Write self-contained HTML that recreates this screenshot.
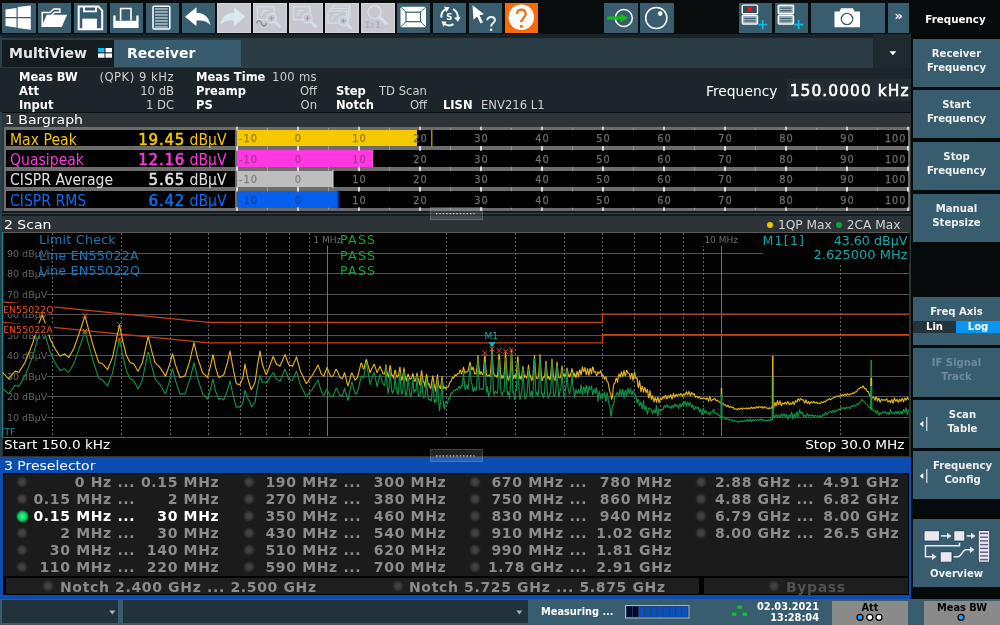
<!DOCTYPE html>
<html><head><meta charset="utf-8"><title>Receiver</title><style>
html,body{margin:0;padding:0;background:#080c0c;}
body{width:1000px;height:625px;position:relative;overflow:hidden;font-family:"DejaVu Sans","Liberation Sans",sans-serif;color:#fff;font-size:11px;}
div,span{position:absolute;box-sizing:border-box;white-space:nowrap;}
svg{position:absolute;overflow:visible;}
.tb{top:2.5px;width:33.5px;height:30px;background:#385d6f;}
.tb.dis{background:#c8c6ce;box-shadow:inset 0 0 0 1px #d4d3da;}
.tb svg{left:0;top:0;}
.sk{left:913px;width:87px;height:48px;background:#385d6f;color:#f0f0f0;font-weight:bold;font-size:10.1px;line-height:14px;text-align:center;}
.sk span{position:static;display:block;}
.b{font-weight:bold;}
.info{font-size:11.5px;line-height:14px;color:#fff;}
.info.v{color:#d0d0d0;font-size:11.6px;}
.ttl{font-size:12px;line-height:15px;color:#fff;left:5px;transform:scaleX(1.165);transform-origin:0 0;}
.bg-lab{font-size:15px;line-height:17.46px;left:10px;transform:scaleX(0.935);transform-origin:0 0;}
.bg-val{font-size:15px;line-height:17.46px;right:773px;transform:scaleX(0.935);transform-origin:100% 0;}
.ps{font-size:14px;font-weight:bold;color:#8c8c8c;line-height:17px;letter-spacing:0.65px;}
.ps.on{color:#fff;}
.led{width:12px;height:12px;border-radius:50%;background:radial-gradient(circle,#484848 0%,#3c3c3c 35%,rgba(44,44,44,0) 72%);}
.led.on{width:13px;height:13px;margin:-0.5px 0 0 -0.5px;background:radial-gradient(circle,#30ff94 0%,#12ea76 28%,#0cb458 50%,rgba(8,100,48,0.75) 66%,rgba(8,60,30,0) 80%);}
</style></head><body><div id="root" style="left:0;top:0;width:1000px;height:625px;will-change:transform">
<div style="left:0;top:0;width:1000px;height:36px;background:#080c0c"></div>
<div class="tb" style="left:2.0px;"><svg width="33.5" height="30" viewBox="0 0 33.5 30"><g transform="translate(0.0,0.0)"><path d="M3.5 6.4 L14.5 5.0 V14.0 H3.5 Z M15.7 4.0 L28.8 2.5 V14.0 H15.7 Z M3.5 15.2 H14.5 V24.5 L3.5 23.1 Z M15.7 15.2 H28.8 V26.7 L15.7 25.1 Z" fill="#fff"/></g></svg></div>
<div class="tb" style="left:37.9px;"><svg width="33.5" height="30" viewBox="0 0 33.5 30"><g transform="translate(0.0,0.0)"><path d="M4.2 23.5 V9.6 H12 L15.8 5.9 H21.8 V9.3 H16.6 L13.6 12.2" fill="none" stroke="#fff" stroke-width="1.5" stroke-linejoin="miter"/><path d="M3.3 24 L8.7 11.8 H29.2 L23.7 24 Z" fill="#fff"/></g></svg></div>
<div class="tb" style="left:73.8px;"><svg width="33.5" height="30" viewBox="0 0 33.5 30"><g transform="translate(0.0,0.0)"><path d="M4.7 3.4 H24.3 L28.2 7.6 V26.3 H4.7 Z" fill="none" stroke="#fff" stroke-width="2"/><path d="M10 3.4 V8.3 H22 V3.4" fill="none" stroke="#fff" stroke-width="1.8"/><rect x="8.3" y="15.7" width="14.6" height="10.6" fill="#fff"/></g></svg></div>
<div class="tb" style="left:109.7px;"><svg width="33.5" height="30" viewBox="0 0 33.5 30"><g transform="translate(0.0,0.0)"><path d="M10.6 17.5 V5.5 H21 V17.5" fill="none" stroke="#fff" stroke-width="1.6"/><path d="M3.3 12.4 H5.6 V17.7 H26.3 V12.4 H28.6 V25.1 H3.3 Z" fill="#fff"/></g></svg></div>
<div class="tb" style="left:145.6px;"><svg width="33.5" height="30" viewBox="0 0 33.5 30"><g transform="translate(0.0,0.0)"><rect x="7" y="3.2" width="16.8" height="22.8" rx="1" fill="none" stroke="#fff" stroke-width="1.5"/><rect x="9" y="5.3" width="12.8" height="1.3" fill="#c4d2d8"/><rect x="9" y="8.3" width="12.8" height="1.3" fill="#c4d2d8"/><rect x="9" y="11.3" width="12.8" height="1.3" fill="#c4d2d8"/><rect x="9" y="14.3" width="12.8" height="1.3" fill="#c4d2d8"/><rect x="9" y="17.3" width="12.8" height="1.3" fill="#c4d2d8"/><rect x="9" y="20.3" width="12.8" height="1.3" fill="#c4d2d8"/><rect x="9" y="23.3" width="12.8" height="1.3" fill="#c4d2d8"/></g></svg></div>
<div class="tb" style="left:181.5px;"><svg width="33.5" height="30" viewBox="0 0 33.5 30"><g transform="translate(-1.5,-2.3)"><path d="M4.5 16 L16 6.5 V12 C23 12 28.5 16 30 24.5 C26.5 20.5 22.5 19.5 16 19.8 V25.5 Z" fill="#fff"/></g></svg></div>
<div class="tb dis" style="left:217.4px;"><svg width="33.5" height="30" viewBox="0 0 33.5 30"><g transform="translate(-0.5,-2.3)"><path d="M29 16 L17.5 6.5 V12 C10.5 12 5 16 3.5 24.5 C7 20.5 11 19.5 17.5 19.8 V25.5 Z" fill="#d8e8ec"/></g></svg></div>
<div class="tb dis" style="left:253.3px;"><svg width="33.5" height="30" viewBox="0 0 33.5 30"><g transform="translate(-0.5,-2.3)"><rect x="5" y="6" width="16.5" height="13" fill="none" stroke="#d3dfe4" stroke-width="1.4"/><path d="M8.5 15.5 L11 10 H15" fill="none" stroke="#d3dfe4" stroke-width="1.2"/><circle cx="19" cy="17.5" r="4.6" fill="#c9c8d1" stroke="#d3dfe4" stroke-width="1.5"/><path d="M17 17.5 H21 M19 15.5 V19.5" stroke="#9a9aa4" stroke-width="1.1"/><path d="M22.5 21 L27 25.5" stroke="#d3dfe4" stroke-width="3" stroke-linecap="round"/><path d="M4 22.5 C5.5 19 7.5 19 9 22.5 S12.5 26 14 22.5" fill="none" stroke="#7f868c" stroke-width="1.2"/></g></svg></div>
<div class="tb dis" style="left:289.2px;"><svg width="33.5" height="30" viewBox="0 0 33.5 30"><g transform="translate(-0.5,-2.3)"><rect x="5" y="6" width="16.5" height="13" fill="none" stroke="#d3dfe4" stroke-width="1.4"/><path d="M8.5 15.5 L11 10 H15" fill="none" stroke="#d3dfe4" stroke-width="1.2"/><circle cx="19" cy="17.5" r="4.6" fill="#c9c8d1" stroke="#d3dfe4" stroke-width="1.5"/><path d="M17 17.5 H21 M19 15.5 V19.5" stroke="#9a9aa4" stroke-width="1.1"/><path d="M22.5 21 L27 25.5" stroke="#d3dfe4" stroke-width="3" stroke-linecap="round"/></g></svg></div>
<div class="tb dis" style="left:325.1px;"><svg width="33.5" height="30" viewBox="0 0 33.5 30"><g transform="translate(0.0,0.0)"><g fill="none" stroke="#d3dfe4" stroke-width="1.2"><path d="M7.5 5.3 V2.6 H25 V14 H23.3"/><path d="M5.2 8 V5.3 H23.3 V17 H21.7"/><rect x="3" y="8" width="18.7" height="12.1"/><path d="M6.5 17 L9.5 11.5 H13"/></g><circle cx="18.4" cy="17.9" r="4.6" fill="#c9c8d1" stroke="#d3dfe4" stroke-width="1.5"/><path d="M16.4 17.9 H20.4 M18.4 15.9 V19.9" stroke="#9a9aa4" stroke-width="1.1"/><path d="M22 21.3 L26 25" stroke="#d3dfe4" stroke-width="3" stroke-linecap="round"/></g></svg></div>
<div class="tb dis" style="left:361.0px;"><svg width="33.5" height="30" viewBox="0 0 33.5 30"><g transform="translate(-0.5,-2.3)"><circle cx="14" cy="11.5" r="6.5" fill="none" stroke="#d3dfe4" stroke-width="1.6"/><path d="M19 16.5 L25.5 22.5" stroke="#d3dfe4" stroke-width="3.2" stroke-linecap="round"/><text x="3.5" y="27.5" font-size="9.5" font-weight="bold" fill="#aeb2ba" >1:1</text></g></svg></div>
<div class="tb" style="left:396.9px;"><svg width="33.5" height="30" viewBox="0 0 33.5 30"><g transform="translate(-0.5,-2.3)"><rect x="4" y="6" width="25.5" height="20.5" rx="1.5" fill="#fff"/><rect x="9.5" y="11.5" width="14.5" height="9.5" fill="none" stroke="#385d6f" stroke-width="1.2"/><path d="M4.5 6.5 L9.5 11.5 M29 6.5 L24 11.5 M4.5 26 L9.5 21 M29 26 L24 21" stroke="#385d6f" stroke-width="1"/></g></svg></div>
<div class="tb" style="left:432.8px;"><svg width="33.5" height="30" viewBox="0 0 33.5 30"><g transform="translate(-0.5,-2.3)"><g fill="none" stroke="#fff" stroke-width="2"><path d="M9 17 A8 8 0 0 1 13.5 8.5"/><path d="M20.5 8.5 A8 8 0 0 1 25 18"/><path d="M21 23.5 A8 8 0 0 1 12 23"/></g><path d="M11.5 6 L17 6.5 L14 11.5 Z M28 16 L25.5 21 L21.5 17 Z M9 20.5 L14 21 L11 26 Z" fill="#fff"/><text x="13.8" y="19.5" font-size="8.5" font-weight="bold" fill="#fff" >S</text></g></svg></div>
<div class="tb" style="left:468.7px;"><svg width="33.5" height="30" viewBox="0 0 33.5 30"><g transform="translate(-0.5,-2.3)"><path d="M4 4.5 L15.5 13.5 L11 14.5 L14.5 21.5 L12 22.8 L8.5 15.8 L5 19 Z" fill="#fff"/><path d="M18.8 19.5 C18.8 15.3 26.4 15.3 26.4 19.5 C26.4 22.5 22.6 22.3 22.6 25.8" fill="none" stroke="#fff" stroke-width="1.9"/><circle cx="22.6" cy="29" r="1.3" fill="#fff"/></g></svg></div>
<div class="tb" style="left:504.6px;background:#f96a0a;"><svg width="33.5" height="30" viewBox="0 0 33.5 30"><g transform="translate(-0.5,-2.3)"><circle cx="16.8" cy="16.6" r="12.8" fill="#fff"/><path d="M12.4 13.3 C12.4 7.5 21.2 7.5 21.2 13.3 C21.2 17.2 16.8 17 16.8 21.6" fill="none" stroke="#f96a0a" stroke-width="2.3"/><circle cx="16.8" cy="25.6" r="1.6" fill="#f96a0a"/></g></svg></div>
<div class="tb" style="left:604.4px"><svg width="33.5" height="30" viewBox="0 0 33.5 30"><circle cx="19.8" cy="15" r="8.5" fill="none" stroke="#fff" stroke-width="1.5"/><path d="M3.3 13.4 H16.3 V10.7 L24.4 15 L16.3 19.3 V16.6 H3.3 Z" fill="#12c012"/></svg></div>
<div class="tb" style="left:640.3px"><svg width="33.5" height="30" viewBox="0 0 33.5 30"><circle cx="16.3" cy="15" r="10.6" fill="none" stroke="#fff" stroke-width="1.5"/><circle cx="20.2" cy="10.6" r="2.3" fill="#fff"/></svg></div>
<div class="tb" style="left:738.7px;width:33px"><svg width="33" height="30" viewBox="0 0 33 30"><rect x="3.3" y="2.1" width="15.2" height="8.7" rx="1" fill="#2c4a5a" stroke="#fff" stroke-width="1.4"/><path d="M8.3 4.2 L13.3 8.7 M13.3 4.2 L8.3 8.7" stroke="#f01414" stroke-width="1.7"/><rect x="3.3" y="12.4" width="15.2" height="8.7" rx="1" fill="#9fb0b8" stroke="#fff" stroke-width="1.4"/><rect x="5.3" y="14.9" width="11.2" height="1.2" fill="#385d6f"/><rect x="5.3" y="17.4" width="11.2" height="1.2" fill="#385d6f"/><path d="M19 21.6 H28.4 M23.7 16.9 V26.3" stroke="#10b8e8" stroke-width="1.8"/></svg></div>
<div class="tb" style="left:775px;width:33px"><svg width="33" height="30" viewBox="0 0 33 30"><rect x="3.3" y="2.1" width="15.2" height="8.7" rx="1" fill="#9fb0b8" stroke="#fff" stroke-width="1.4"/><rect x="5.3" y="4.6" width="11.2" height="1.2" fill="#385d6f"/><rect x="5.3" y="7.1" width="11.2" height="1.2" fill="#385d6f"/><rect x="3.3" y="12.4" width="15.2" height="8.7" rx="1" fill="#9fb0b8" stroke="#fff" stroke-width="1.4"/><rect x="5.3" y="14.9" width="11.2" height="1.2" fill="#385d6f"/><rect x="5.3" y="17.4" width="11.2" height="1.2" fill="#385d6f"/><path d="M19 21.6 H28.4 M23.7 16.9 V26.3" stroke="#10b8e8" stroke-width="1.8"/></svg></div>
<div class="tb" style="left:810.5px;width:74.5px"><svg width="74.5" height="30" viewBox="0 0 74.5 30"><path d="M23.5 8.5 H28.5 L30 5.3 H42 L43.5 8.5 H49 V24.3 H23.5 Z" fill="#fff"/><circle cx="36" cy="16" r="5.7" fill="#fff" stroke="#385d6f" stroke-width="1.3"/></svg></div>
<div class="tb" style="left:888.2px;width:20.8px"><span style="left:0;width:20.8px;top:6.5px;text-align:center;font-size:13px;font-weight:bold;line-height:14px">»</span></div>
<div style="left:0px;top:34px;width:911px;height:4.2px;background:#1a2428"></div>
<div style="left:0px;top:36px;width:1.5px;height:563px;background:#27404e"></div>
<div style="left:1.5px;top:37.8px;width:871.5px;height:30.2px;background:#2b3b44"></div>
<div style="left:873px;top:34px;width:38px;height:33.5px;background:#1e2a30"></div>
<div style="left:2px;top:40px;width:112.3px;height:27.3px;background:#151c1f"></div>
<div style="left:114.3px;top:40px;width:126.5px;height:27.3px;background:#385c6e"></div>
<div class="b" style="left:9px;top:44px;font-size:14px;line-height:18px;color:#e8e8e8">MultiView</div>
<svg style="left:98px;top:48px" width="14" height="10" viewBox="0 0 14 10"><rect x="0" y="0" width="6.5" height="4.3" fill="#18b4f0"/><rect x="7.5" y="0" width="6.5" height="4.3" fill="#fff"/><rect x="0" y="5.4" width="6.5" height="4.3" fill="#fff"/><rect x="7.5" y="5.4" width="6.5" height="4.3" fill="#fff"/></svg>
<div class="b" style="left:127px;top:44px;font-size:14px;line-height:18px;color:#fff">Receiver</div>
<svg style="left:889px;top:51px" width="8" height="5" viewBox="0 0 8 5"><path d="M0.5 0.3 H7.3 L3.9 4.3 Z" fill="#fff"/></svg>
<div style="left:0px;top:67.5px;width:911px;height:44.5px;background:#1c252a"></div>
<div class="info b" style="left:19px;top:69.7px">Meas BW</div>
<div class="info v" style="right:826px;top:69.7px"><span style="position:static;letter-spacing:0.5px">(QPK) 9 kHz</span></div>
<div class="info b" style="left:19px;top:83.7px">Att</div>
<div class="info v" style="right:826px;top:83.7px">10 dB</div>
<div class="info b" style="left:19px;top:97.7px">Input</div>
<div class="info v" style="right:826px;top:97.7px">1 DC</div>
<div class="info b" style="left:196px;top:69.7px">Meas Time</div>
<div class="info v" style="left:272px;top:69.7px"><span style="position:static;letter-spacing:0.3px">100 ms</span></div>
<div class="info b" style="left:196px;top:83.7px">Preamp</div>
<div class="info v" style="right:683px;top:83.7px">Off</div>
<div class="info b" style="left:196px;top:97.7px">PS</div>
<div class="info v" style="right:683px;top:97.7px">On</div>
<div class="info b" style="left:336px;top:83.7px">Step</div>
<div class="info v" style="left:379px;top:83.7px">TD Scan</div>
<div class="info b" style="left:336px;top:97.7px">Notch</div>
<div class="info v" style="right:573px;top:97.7px">Off</div>
<div class="info b" style="left:443px;top:97.7px">LISN</div>
<div class="info v" style="left:481px;top:97.7px">ENV216 L1</div>
<div style="left:706px;top:81.8px;font-size:14.2px;line-height:18px;color:#fff;transform:scaleX(0.975);transform-origin:0 0">Frequency</div>
<div style="left:787px;top:79px;width:124px;height:21.5px;background:#222c32"></div>
<div style="right:90.4px;top:82.2px;font-size:15.4px;line-height:18px;color:#fff;letter-spacing:1.08px;-webkit-text-stroke:0.6px #fff">150.0000 kHz</div>
<div style="left:2px;top:112px;width:909px;height:103px;background:#2d3437"></div>
<div style="left:2px;top:112px;width:909px;height:1px;background:#0c1012"></div>
<div class="ttl" style="top:113px;left:4.6px">1 Bargraph</div>
<div style="left:4px;top:126.5px;width:906px;height:84.5px;background:#6c6c6c"></div>
<div style="left:6px;top:129.90px;width:229px;height:16.5px;background:#000"></div>
<div style="left:237px;top:129.90px;width:671px;height:16.5px;background:#000"></div>
<div class="bg-lab" style="top:131.50px;color:#f5c800">Max Peak</div>
<div class="bg-val" style="top:131.50px;color:#f5c800;right:815px;transform:none;letter-spacing:0.75px;-webkit-text-stroke:0.55px #f5c800">19.45</div>
<div class="bg-val" style="top:131.50px;color:#f5c800">dBµV</div>
<div style="left:237px;top:129.90px;width:179.6px;height:16.5px;background:#f5c800"></div>
<div style="left:6px;top:150.35px;width:229px;height:16.5px;background:#000"></div>
<div style="left:237px;top:150.35px;width:671px;height:16.5px;background:#000"></div>
<div class="bg-lab" style="top:151.95px;color:#ff38e0">Quasipeak</div>
<div class="bg-val" style="top:151.95px;color:#ff38e0;right:815px;transform:none;letter-spacing:0.75px;-webkit-text-stroke:0.55px #ff38e0">12.16</div>
<div class="bg-val" style="top:151.95px;color:#ff38e0">dBµV</div>
<div style="left:237px;top:150.35px;width:135.2px;height:16.5px;background:#ff38e0"></div>
<div style="left:6px;top:170.80px;width:229px;height:16.5px;background:#000"></div>
<div style="left:237px;top:170.80px;width:671px;height:16.5px;background:#000"></div>
<div class="bg-lab" style="top:172.40px;color:#e0e0e0">CISPR Average</div>
<div class="bg-val" style="top:172.40px;color:#e0e0e0;right:815px;transform:none;letter-spacing:0.75px;-webkit-text-stroke:0.55px #e0e0e0">5.65</div>
<div class="bg-val" style="top:172.40px;color:#e0e0e0">dBµV</div>
<div style="left:237px;top:170.80px;width:95.5px;height:16.5px;background:#bdbdbd"></div>
<div style="left:6px;top:191.25px;width:229px;height:16.5px;background:#000"></div>
<div style="left:237px;top:191.25px;width:671px;height:16.5px;background:#000"></div>
<div class="bg-lab" style="top:192.85px;color:#0a6cf5">CISPR RMS</div>
<div class="bg-val" style="top:192.85px;color:#0a6cf5;right:815px;transform:none;letter-spacing:0.75px;-webkit-text-stroke:0.55px #0a6cf5">6.42</div>
<div class="bg-val" style="top:192.85px;color:#0a6cf5">dBµV</div>
<div style="left:237px;top:191.25px;width:100.2px;height:16.5px;background:#0560f0"></div>
<div style="left:2px;top:210.8px;width:909px;height:2px;background:#141b1f"></div>
<div style="left:2px;top:212.6px;width:909px;height:1.4px;background:#34444d"></div>
<div style="left:2px;top:214px;width:909px;height:1.6px;background:#141b1f"></div>
<div style="left:2px;top:215.6px;width:909px;height:241px;background:#2d3437"></div>
<div class="ttl" style="top:217.7px;left:3.6px">2 Scan</div>
<div style="left:3px;top:232.3px;width:906px;height:224.2px;background:#030303"></div>
<div style="left:3px;top:436.5px;width:906px;height:1px;background:#5a5a5a"></div>
<div style="left:3px;top:231.6px;width:906px;height:1px;background:#5c5858"></div>
<div style="left:3.5px;top:438.3px;font-size:12px;line-height:15px;color:#fff;transform:scaleX(1.135);transform-origin:0 0">Start 150.0 kHz</div>
<div style="right:95.5px;top:438.3px;font-size:12px;line-height:15px;color:#fff;transform:scaleX(1.135);transform-origin:100% 0">Stop 30.0 MHz</div>
<div style="left:778px;top:217.5px;font-size:12.2px;line-height:15px;color:#d4d4d4">1QP Max</div>
<div style="left:846.8px;top:217.5px;font-size:12.2px;line-height:15px;color:#d4d4d4">2CA Max</div>
<div style="left:767.4px;top:221.7px;width:6px;height:6px;border-radius:50%;background:#f5c400"></div>
<div style="left:836px;top:221.7px;width:6px;height:6px;border-radius:50%;background:#10a040"></div>
<div style="left:0px;top:456.5px;width:911px;height:142px;background:#0a4cb0"></div>
<div class="ttl" style="top:459px;left:3.8px">3 Preselector</div>
<div style="left:3px;top:473px;width:906px;height:122px;background:#000"></div>
<div style="left:4px;top:474px;width:904px;height:102px;background:#1b1b1b"></div>
<div style="left:6px;top:578px;width:693px;height:16px;background:#1e1e1e"></div>
<div style="left:704px;top:578px;width:204px;height:16px;background:#1e1e1e"></div>
<div class="led" style="left:16.0px;top:475.8px"></div>
<div class="ps" style="right:864.7px;top:474.0px">0 Hz ...</div>
<div class="ps" style="right:780.7px;top:474.0px">0.15 MHz</div>
<div class="led" style="left:16.0px;top:492.9px"></div>
<div class="ps" style="right:864.7px;top:491.1px">0.15 MHz ...</div>
<div class="ps" style="right:780.7px;top:491.1px">2 MHz</div>
<div class="led on" style="left:16.0px;top:510.0px"></div>
<div class="ps on" style="right:864.7px;top:508.2px">0.15 MHz ...</div>
<div class="ps on" style="right:780.7px;top:508.2px">30 MHz</div>
<div class="led" style="left:16.0px;top:527.0px"></div>
<div class="ps" style="right:864.7px;top:525.2px">2 MHz ...</div>
<div class="ps" style="right:780.7px;top:525.2px">30 MHz</div>
<div class="led" style="left:16.0px;top:544.1px"></div>
<div class="ps" style="right:864.7px;top:542.3px">30 MHz ...</div>
<div class="ps" style="right:780.7px;top:542.3px">140 MHz</div>
<div class="led" style="left:16.0px;top:561.2px"></div>
<div class="ps" style="right:864.7px;top:559.4px">110 MHz ...</div>
<div class="ps" style="right:780.7px;top:559.4px">220 MHz</div>
<div class="led" style="left:242.5px;top:475.8px"></div>
<div class="ps" style="right:638.7px;top:474.0px">190 MHz ...</div>
<div class="ps" style="right:553.7px;top:474.0px">300 MHz</div>
<div class="led" style="left:242.5px;top:492.9px"></div>
<div class="ps" style="right:638.7px;top:491.1px">270 MHz ...</div>
<div class="ps" style="right:553.7px;top:491.1px">380 MHz</div>
<div class="led" style="left:242.5px;top:510.0px"></div>
<div class="ps" style="right:638.7px;top:508.2px">350 MHz ...</div>
<div class="ps" style="right:553.7px;top:508.2px">460 MHz</div>
<div class="led" style="left:242.5px;top:527.0px"></div>
<div class="ps" style="right:638.7px;top:525.2px">430 MHz ...</div>
<div class="ps" style="right:553.7px;top:525.2px">540 MHz</div>
<div class="led" style="left:242.5px;top:544.1px"></div>
<div class="ps" style="right:638.7px;top:542.3px">510 MHz ...</div>
<div class="ps" style="right:553.7px;top:542.3px">620 MHz</div>
<div class="led" style="left:242.5px;top:561.2px"></div>
<div class="ps" style="right:638.7px;top:559.4px">590 MHz ...</div>
<div class="ps" style="right:553.7px;top:559.4px">700 MHz</div>
<div class="led" style="left:469.0px;top:475.8px"></div>
<div class="ps" style="right:412.7px;top:474.0px">670 MHz ...</div>
<div class="ps" style="right:327.7px;top:474.0px">780 MHz</div>
<div class="led" style="left:469.0px;top:492.9px"></div>
<div class="ps" style="right:412.7px;top:491.1px">750 MHz ...</div>
<div class="ps" style="right:327.7px;top:491.1px">860 MHz</div>
<div class="led" style="left:469.0px;top:510.0px"></div>
<div class="ps" style="right:412.7px;top:508.2px">830 MHz ...</div>
<div class="ps" style="right:327.7px;top:508.2px">940 MHz</div>
<div class="led" style="left:469.0px;top:527.0px"></div>
<div class="ps" style="right:412.7px;top:525.2px">910 MHz ...</div>
<div class="ps" style="right:327.7px;top:525.2px">1.02 GHz</div>
<div class="led" style="left:469.0px;top:544.1px"></div>
<div class="ps" style="right:412.7px;top:542.3px">990 MHz ...</div>
<div class="ps" style="right:327.7px;top:542.3px">1.81 GHz</div>
<div class="led" style="left:469.0px;top:561.2px"></div>
<div class="ps" style="right:412.7px;top:559.4px">1.78 GHz ...</div>
<div class="ps" style="right:327.7px;top:559.4px">2.91 GHz</div>
<div class="led" style="left:695.0px;top:475.8px"></div>
<div class="ps" style="right:185.7px;top:474.0px">2.88 GHz ...</div>
<div class="ps" style="right:100.7px;top:474.0px">4.91 GHz</div>
<div class="led" style="left:695.0px;top:492.9px"></div>
<div class="ps" style="right:185.7px;top:491.1px">4.88 GHz ...</div>
<div class="ps" style="right:100.7px;top:491.1px">6.82 GHz</div>
<div class="led" style="left:695.0px;top:510.0px"></div>
<div class="ps" style="right:185.7px;top:508.2px">6.79 GHz ...</div>
<div class="ps" style="right:100.7px;top:508.2px">8.00 GHz</div>
<div class="led" style="left:695.0px;top:527.0px"></div>
<div class="ps" style="right:185.7px;top:525.2px">8.00 GHz ...</div>
<div class="ps" style="right:100.7px;top:525.2px">26.5 GHz</div>
<div class="led" style="left:42px;top:580px"></div>
<div class="ps" style="left:60px;top:579px">Notch 2.400 GHz ... 2.500 GHz</div>
<div class="led" style="left:391.5px;top:580px"></div>
<div class="ps" style="left:409px;top:579px">Notch 5.725 GHz ... 5.875 GHz</div>
<div class="led" style="left:768px;top:580px"></div>
<div class="ps" style="left:786px;top:579px;color:#505050">Bypass</div>
<div style="left:0px;top:598.7px;width:1000px;height:26.3px;background:#385d6f"></div>
<div style="left:2px;top:600.3px;width:116px;height:22.7px;background:#22323a"></div>
<div style="left:123px;top:600.3px;width:405px;height:22.7px;background:#22323a"></div>
<svg style="left:108.7px;top:610.3px" width="7" height="5" viewBox="0 0 7 5"><path d="M0.3 0.4 H6.3 L3.3 4.4 Z" fill="#a8b2b8"/></svg>
<svg style="left:516.3px;top:610.3px" width="7" height="5" viewBox="0 0 7 5"><path d="M0.3 0.4 H6.3 L3.3 4.4 Z" fill="#a8b2b8"/></svg>
<div class="b" style="left:541px;top:604.5px;font-size:9.8px;line-height:14px">Measuring ...</div>
<svg style="left:625px;top:604.5px" width="64.5" height="13.5" viewBox="0 0 64.5 13.5"><rect x="0.5" y="0.5" width="63.5" height="12.5" fill="#2a3f5a" stroke="#aab4bc" stroke-width="1"/><rect x="1.70" y="1.6" width="5.3" height="10.3" fill="#070830"/><rect x="7.85" y="1.6" width="5.3" height="10.3" fill="#070830"/><rect x="14.00" y="1.6" width="5.3" height="10.3" fill="#0a50b8"/><rect x="20.15" y="1.6" width="5.3" height="10.3" fill="#0a50b8"/><rect x="26.30" y="1.6" width="5.3" height="10.3" fill="#0a50b8"/><rect x="32.45" y="1.6" width="5.3" height="10.3" fill="#0a50b8"/><rect x="38.60" y="1.6" width="5.3" height="10.3" fill="#0a50b8"/><rect x="44.75" y="1.6" width="5.3" height="10.3" fill="#0a50b8"/><rect x="50.90" y="1.6" width="5.3" height="10.3" fill="#0a50b8"/><rect x="57.05" y="1.6" width="5.3" height="10.3" fill="#0a50b8"/></svg>
<svg style="left:731px;top:604px" width="18" height="14" viewBox="0 0 18 14"><g fill="#10c030"><rect x="6.5" y="1.5" width="4.5" height="3.3"/><rect x="1" y="8.5" width="4.5" height="3.3"/><rect x="11.5" y="8.5" width="4.5" height="3.3"/></g><path d="M8.7 5 V7 M3.2 8.5 V7 H13.8 V8.5" stroke="#10a028" stroke-width="0.8" fill="none" stroke-dasharray="1 1"/></svg>
<div class="b" style="right:181px;top:601px;font-size:9.8px;line-height:11.3px;text-align:right"><span style="position:static;display:block">02.03.2021</span><span style="position:static;display:block">13:28:04</span></div>
<div style="left:832px;top:600.5px;width:76px;height:24.5px;background:#8a8a8a"></div>
<div class="b" style="left:832px;top:600.5px;width:76px;text-align:center;font-size:9.8px;line-height:13px;color:#000">Att</div>
<div style="left:924px;top:600.5px;width:76px;height:24.5px;background:#8a8a8a"></div>
<div class="b" style="left:924px;top:600.5px;width:76px;text-align:center;font-size:9.8px;line-height:13px;color:#000">Meas BW</div>
<div style="left:911px;top:0;width:89px;height:598.7px;background:#070a0a"></div>
<div class="b" style="left:911px;top:11.8px;width:89px;text-align:center;font-size:10.3px;line-height:14px;color:#fff">Frequency</div>
<div class="sk" style="top:38.5px;height:48.0px;"><span style="margin-top:8px;padding-left:0px">Receiver</span><span style="padding-left:0px">Frequency</span></div>
<div class="sk" style="top:90.2px;height:48.0px;"><span style="margin-top:8px;padding-left:0px">Start</span><span style="padding-left:0px">Frequency</span></div>
<div class="sk" style="top:141.9px;height:48.0px;"><span style="margin-top:8px;padding-left:0px">Stop</span><span style="padding-left:0px">Frequency</span></div>
<div class="sk" style="top:193.6px;height:48.0px;"><span style="margin-top:8px;padding-left:0px">Manual</span><span style="padding-left:0px">Stepsize</span></div>
<div class="sk" style="top:296.5px;height:48px"><span style="margin-top:8px">Freq Axis</span></div>
<div class="b" style="left:913px;top:320.5px;width:43px;height:12px;background:#25333b;text-align:center;font-size:10.1px;line-height:12px">Lin</div>
<div class="b" style="left:956px;top:320.5px;width:44px;height:12px;background:#0a96f0;text-align:center;font-size:10.1px;line-height:12px">Log</div>
<div class="sk" style="top:348.0px;height:48.5px;color:#6d8a98;"><span style="margin-top:8px;padding-left:0px">IF Signal</span><span style="padding-left:0px">Track</span></div>
<div class="sk" style="top:399.7px;height:48.0px;"><span style="margin-top:8px;padding-left:12px">Scan</span><span style="padding-left:12px">Table</span></div>
<div class="sk" style="top:451.3px;height:48.0px;"><span style="margin-top:8px;padding-left:12px">Frequency</span><span style="padding-left:12px">Config</span></div>
<svg style="left:919px;top:417.3px" width="10" height="14" viewBox="0 0 10 14"><path d="M4.3 4 V10 L0.8 7 Z" fill="#fff"/><rect x="7.3" y="0" width="1" height="14" fill="#fff"/></svg>
<svg style="left:919px;top:468.6px" width="10" height="14" viewBox="0 0 10 14"><path d="M4.3 4 V10 L0.8 7 Z" fill="#fff"/><rect x="7.3" y="0" width="1" height="14" fill="#fff"/></svg>
<div class="sk" style="top:519.3px;height:68px"><span style="margin-top:47.5px">Overview</span></div>
<svg style="left:913px;top:519.3px" width="87" height="68" viewBox="913 519.3 87 68"><g fill="#e8e8f0" stroke="#1c2c4c" stroke-width="0.8"><rect x="924" y="531" width="15.6" height="10.4" rx="1"/><rect x="953.8" y="531" width="11" height="10.4" rx="1"/><rect x="940.2" y="552" width="11.8" height="10.5" rx="1"/><rect x="978.3" y="530.8" width="11.4" height="31.7" rx="1"/></g><rect x="980" y="533.0" width="8" height="1.4" fill="#5a5a80"/><rect x="980" y="536.8" width="8" height="1.4" fill="#5a5a80"/><rect x="980" y="540.5" width="8" height="1.4" fill="#5a5a80"/><rect x="980" y="544.2" width="8" height="1.4" fill="#5a5a80"/><rect x="980" y="548.0" width="8" height="1.4" fill="#5a5a80"/><rect x="980" y="551.8" width="8" height="1.4" fill="#5a5a80"/><rect x="980" y="555.5" width="8" height="1.4" fill="#5a5a80"/><rect x="980" y="559.2" width="8" height="1.4" fill="#5a5a80"/><g fill="none" stroke="#e8e8f0" stroke-width="1.5"><path d="M941 536.2 H948"/><path d="M966.5 536.2 H972"/><path d="M959.5 543 V546 H925.5 V557 H933"/><path d="M953.5 557 H958 C962 557 962 550 966 550 H971"/></g><path d="M947 533 L951.5 536.2 L947 539.4 Z M971 533 L975.5 536.2 L971 539.4 Z M932 553.8 L936.5 557 L932 560.2 Z M970 546.8 L974.5 550 L970 553.2 Z" fill="#e8e8f0"/></svg>
<svg style="left:0;top:0" width="1000" height="625" viewBox="0 0 1000 625">
<text x="239.0" y="142.2" font-size="9.8" letter-spacing="0.95" stroke-width="0.25" stroke="currentColor" style="color:#9a7d00" fill="currentColor">-10</text>
<text x="298.4" y="142.2" font-size="9.8" letter-spacing="0.95" stroke-width="0.25" stroke="currentColor" style="color:#9a7d00" fill="currentColor" text-anchor="middle">0</text>
<text x="359.4" y="142.2" font-size="9.8" letter-spacing="0.95" stroke-width="0.25" stroke="currentColor" style="color:#9a7d00" fill="currentColor" text-anchor="middle">10</text>
<text x="420.4" y="142.2" font-size="9.8" letter-spacing="0.95" stroke-width="0.25" stroke="currentColor" style="color:#6e6e6e" fill="currentColor" text-anchor="middle">20</text>
<text x="481.4" y="142.2" font-size="9.8" letter-spacing="0.95" stroke-width="0.25" stroke="currentColor" style="color:#6e6e6e" fill="currentColor" text-anchor="middle">30</text>
<text x="542.4" y="142.2" font-size="9.8" letter-spacing="0.95" stroke-width="0.25" stroke="currentColor" style="color:#6e6e6e" fill="currentColor" text-anchor="middle">40</text>
<text x="603.4" y="142.2" font-size="9.8" letter-spacing="0.95" stroke-width="0.25" stroke="currentColor" style="color:#6e6e6e" fill="currentColor" text-anchor="middle">50</text>
<text x="664.4" y="142.2" font-size="9.8" letter-spacing="0.95" stroke-width="0.25" stroke="currentColor" style="color:#6e6e6e" fill="currentColor" text-anchor="middle">60</text>
<text x="725.4" y="142.2" font-size="9.8" letter-spacing="0.95" stroke-width="0.25" stroke="currentColor" style="color:#6e6e6e" fill="currentColor" text-anchor="middle">70</text>
<text x="786.4" y="142.2" font-size="9.8" letter-spacing="0.95" stroke-width="0.25" stroke="currentColor" style="color:#6e6e6e" fill="currentColor" text-anchor="middle">80</text>
<text x="847.4" y="142.2" font-size="9.8" letter-spacing="0.95" stroke-width="0.25" stroke="currentColor" style="color:#6e6e6e" fill="currentColor" text-anchor="middle">90</text>
<text x="906.5" y="142.2" font-size="9.8" letter-spacing="0.95" stroke-width="0.25" stroke="currentColor" style="color:#6e6e6e" fill="currentColor" text-anchor="end">100</text>
<rect x="236.2" y="126.70" width="1.6" height="3.6" fill="#e8e8e8"/>
<rect x="236.2" y="146.00" width="1.6" height="3.6" fill="#e8e8e8"/>
<rect x="267.0" y="127.90" width="1" height="2" fill="#9a9a9a"/>
<rect x="267.0" y="146.40" width="1" height="2" fill="#9a9a9a"/>
<rect x="297.2" y="126.70" width="1.6" height="3.6" fill="#e8e8e8"/>
<rect x="297.2" y="146.00" width="1.6" height="3.6" fill="#e8e8e8"/>
<rect x="328.0" y="127.90" width="1" height="2" fill="#9a9a9a"/>
<rect x="328.0" y="146.40" width="1" height="2" fill="#9a9a9a"/>
<rect x="358.2" y="126.70" width="1.6" height="3.6" fill="#e8e8e8"/>
<rect x="358.2" y="146.00" width="1.6" height="3.6" fill="#e8e8e8"/>
<rect x="389.0" y="127.90" width="1" height="2" fill="#9a9a9a"/>
<rect x="389.0" y="146.40" width="1" height="2" fill="#9a9a9a"/>
<rect x="419.2" y="126.70" width="1.6" height="3.6" fill="#e8e8e8"/>
<rect x="419.2" y="146.00" width="1.6" height="3.6" fill="#e8e8e8"/>
<rect x="450.0" y="127.90" width="1" height="2" fill="#9a9a9a"/>
<rect x="450.0" y="146.40" width="1" height="2" fill="#9a9a9a"/>
<rect x="480.2" y="126.70" width="1.6" height="3.6" fill="#e8e8e8"/>
<rect x="480.2" y="146.00" width="1.6" height="3.6" fill="#e8e8e8"/>
<rect x="511.0" y="127.90" width="1" height="2" fill="#9a9a9a"/>
<rect x="511.0" y="146.40" width="1" height="2" fill="#9a9a9a"/>
<rect x="541.2" y="126.70" width="1.6" height="3.6" fill="#e8e8e8"/>
<rect x="541.2" y="146.00" width="1.6" height="3.6" fill="#e8e8e8"/>
<rect x="572.0" y="127.90" width="1" height="2" fill="#9a9a9a"/>
<rect x="572.0" y="146.40" width="1" height="2" fill="#9a9a9a"/>
<rect x="602.2" y="126.70" width="1.6" height="3.6" fill="#e8e8e8"/>
<rect x="602.2" y="146.00" width="1.6" height="3.6" fill="#e8e8e8"/>
<rect x="633.0" y="127.90" width="1" height="2" fill="#9a9a9a"/>
<rect x="633.0" y="146.40" width="1" height="2" fill="#9a9a9a"/>
<rect x="663.2" y="126.70" width="1.6" height="3.6" fill="#e8e8e8"/>
<rect x="663.2" y="146.00" width="1.6" height="3.6" fill="#e8e8e8"/>
<rect x="694.0" y="127.90" width="1" height="2" fill="#9a9a9a"/>
<rect x="694.0" y="146.40" width="1" height="2" fill="#9a9a9a"/>
<rect x="724.2" y="126.70" width="1.6" height="3.6" fill="#e8e8e8"/>
<rect x="724.2" y="146.00" width="1.6" height="3.6" fill="#e8e8e8"/>
<rect x="755.0" y="127.90" width="1" height="2" fill="#9a9a9a"/>
<rect x="755.0" y="146.40" width="1" height="2" fill="#9a9a9a"/>
<rect x="785.2" y="126.70" width="1.6" height="3.6" fill="#e8e8e8"/>
<rect x="785.2" y="146.00" width="1.6" height="3.6" fill="#e8e8e8"/>
<rect x="816.0" y="127.90" width="1" height="2" fill="#9a9a9a"/>
<rect x="816.0" y="146.40" width="1" height="2" fill="#9a9a9a"/>
<rect x="846.2" y="126.70" width="1.6" height="3.6" fill="#e8e8e8"/>
<rect x="846.2" y="146.00" width="1.6" height="3.6" fill="#e8e8e8"/>
<rect x="877.0" y="127.90" width="1" height="2" fill="#9a9a9a"/>
<rect x="877.0" y="146.40" width="1" height="2" fill="#9a9a9a"/>
<rect x="907.2" y="126.70" width="1.6" height="3.6" fill="#e8e8e8"/>
<rect x="907.2" y="146.00" width="1.6" height="3.6" fill="#e8e8e8"/>
<text x="239.0" y="162.7" font-size="9.8" letter-spacing="0.95" stroke-width="0.25" stroke="currentColor" style="color:#a8329a" fill="currentColor">-10</text>
<text x="298.4" y="162.7" font-size="9.8" letter-spacing="0.95" stroke-width="0.25" stroke="currentColor" style="color:#a8329a" fill="currentColor" text-anchor="middle">0</text>
<text x="359.4" y="162.7" font-size="9.8" letter-spacing="0.95" stroke-width="0.25" stroke="currentColor" style="color:#a8329a" fill="currentColor" text-anchor="middle">10</text>
<text x="420.4" y="162.7" font-size="9.8" letter-spacing="0.95" stroke-width="0.25" stroke="currentColor" style="color:#6e6e6e" fill="currentColor" text-anchor="middle">20</text>
<text x="481.4" y="162.7" font-size="9.8" letter-spacing="0.95" stroke-width="0.25" stroke="currentColor" style="color:#6e6e6e" fill="currentColor" text-anchor="middle">30</text>
<text x="542.4" y="162.7" font-size="9.8" letter-spacing="0.95" stroke-width="0.25" stroke="currentColor" style="color:#6e6e6e" fill="currentColor" text-anchor="middle">40</text>
<text x="603.4" y="162.7" font-size="9.8" letter-spacing="0.95" stroke-width="0.25" stroke="currentColor" style="color:#6e6e6e" fill="currentColor" text-anchor="middle">50</text>
<text x="664.4" y="162.7" font-size="9.8" letter-spacing="0.95" stroke-width="0.25" stroke="currentColor" style="color:#6e6e6e" fill="currentColor" text-anchor="middle">60</text>
<text x="725.4" y="162.7" font-size="9.8" letter-spacing="0.95" stroke-width="0.25" stroke="currentColor" style="color:#6e6e6e" fill="currentColor" text-anchor="middle">70</text>
<text x="786.4" y="162.7" font-size="9.8" letter-spacing="0.95" stroke-width="0.25" stroke="currentColor" style="color:#6e6e6e" fill="currentColor" text-anchor="middle">80</text>
<text x="847.4" y="162.7" font-size="9.8" letter-spacing="0.95" stroke-width="0.25" stroke="currentColor" style="color:#6e6e6e" fill="currentColor" text-anchor="middle">90</text>
<text x="906.5" y="162.7" font-size="9.8" letter-spacing="0.95" stroke-width="0.25" stroke="currentColor" style="color:#6e6e6e" fill="currentColor" text-anchor="end">100</text>
<rect x="236.2" y="147.15" width="1.6" height="3.6" fill="#e8e8e8"/>
<rect x="236.2" y="166.45" width="1.6" height="3.6" fill="#e8e8e8"/>
<rect x="267.0" y="148.35" width="1" height="2" fill="#9a9a9a"/>
<rect x="267.0" y="166.85" width="1" height="2" fill="#9a9a9a"/>
<rect x="297.2" y="147.15" width="1.6" height="3.6" fill="#e8e8e8"/>
<rect x="297.2" y="166.45" width="1.6" height="3.6" fill="#e8e8e8"/>
<rect x="328.0" y="148.35" width="1" height="2" fill="#9a9a9a"/>
<rect x="328.0" y="166.85" width="1" height="2" fill="#9a9a9a"/>
<rect x="358.2" y="147.15" width="1.6" height="3.6" fill="#e8e8e8"/>
<rect x="358.2" y="166.45" width="1.6" height="3.6" fill="#e8e8e8"/>
<rect x="389.0" y="148.35" width="1" height="2" fill="#9a9a9a"/>
<rect x="389.0" y="166.85" width="1" height="2" fill="#9a9a9a"/>
<rect x="419.2" y="147.15" width="1.6" height="3.6" fill="#e8e8e8"/>
<rect x="419.2" y="166.45" width="1.6" height="3.6" fill="#e8e8e8"/>
<rect x="450.0" y="148.35" width="1" height="2" fill="#9a9a9a"/>
<rect x="450.0" y="166.85" width="1" height="2" fill="#9a9a9a"/>
<rect x="480.2" y="147.15" width="1.6" height="3.6" fill="#e8e8e8"/>
<rect x="480.2" y="166.45" width="1.6" height="3.6" fill="#e8e8e8"/>
<rect x="511.0" y="148.35" width="1" height="2" fill="#9a9a9a"/>
<rect x="511.0" y="166.85" width="1" height="2" fill="#9a9a9a"/>
<rect x="541.2" y="147.15" width="1.6" height="3.6" fill="#e8e8e8"/>
<rect x="541.2" y="166.45" width="1.6" height="3.6" fill="#e8e8e8"/>
<rect x="572.0" y="148.35" width="1" height="2" fill="#9a9a9a"/>
<rect x="572.0" y="166.85" width="1" height="2" fill="#9a9a9a"/>
<rect x="602.2" y="147.15" width="1.6" height="3.6" fill="#e8e8e8"/>
<rect x="602.2" y="166.45" width="1.6" height="3.6" fill="#e8e8e8"/>
<rect x="633.0" y="148.35" width="1" height="2" fill="#9a9a9a"/>
<rect x="633.0" y="166.85" width="1" height="2" fill="#9a9a9a"/>
<rect x="663.2" y="147.15" width="1.6" height="3.6" fill="#e8e8e8"/>
<rect x="663.2" y="166.45" width="1.6" height="3.6" fill="#e8e8e8"/>
<rect x="694.0" y="148.35" width="1" height="2" fill="#9a9a9a"/>
<rect x="694.0" y="166.85" width="1" height="2" fill="#9a9a9a"/>
<rect x="724.2" y="147.15" width="1.6" height="3.6" fill="#e8e8e8"/>
<rect x="724.2" y="166.45" width="1.6" height="3.6" fill="#e8e8e8"/>
<rect x="755.0" y="148.35" width="1" height="2" fill="#9a9a9a"/>
<rect x="755.0" y="166.85" width="1" height="2" fill="#9a9a9a"/>
<rect x="785.2" y="147.15" width="1.6" height="3.6" fill="#e8e8e8"/>
<rect x="785.2" y="166.45" width="1.6" height="3.6" fill="#e8e8e8"/>
<rect x="816.0" y="148.35" width="1" height="2" fill="#9a9a9a"/>
<rect x="816.0" y="166.85" width="1" height="2" fill="#9a9a9a"/>
<rect x="846.2" y="147.15" width="1.6" height="3.6" fill="#e8e8e8"/>
<rect x="846.2" y="166.45" width="1.6" height="3.6" fill="#e8e8e8"/>
<rect x="877.0" y="148.35" width="1" height="2" fill="#9a9a9a"/>
<rect x="877.0" y="166.85" width="1" height="2" fill="#9a9a9a"/>
<rect x="907.2" y="147.15" width="1.6" height="3.6" fill="#e8e8e8"/>
<rect x="907.2" y="166.45" width="1.6" height="3.6" fill="#e8e8e8"/>
<text x="239.0" y="183.1" font-size="9.8" letter-spacing="0.95" stroke-width="0.25" stroke="currentColor" style="color:#7d7d7d" fill="currentColor">-10</text>
<text x="298.4" y="183.1" font-size="9.8" letter-spacing="0.95" stroke-width="0.25" stroke="currentColor" style="color:#7d7d7d" fill="currentColor" text-anchor="middle">0</text>
<text x="359.4" y="183.1" font-size="9.8" letter-spacing="0.95" stroke-width="0.25" stroke="currentColor" style="color:#6e6e6e" fill="currentColor" text-anchor="middle">10</text>
<text x="420.4" y="183.1" font-size="9.8" letter-spacing="0.95" stroke-width="0.25" stroke="currentColor" style="color:#6e6e6e" fill="currentColor" text-anchor="middle">20</text>
<text x="481.4" y="183.1" font-size="9.8" letter-spacing="0.95" stroke-width="0.25" stroke="currentColor" style="color:#6e6e6e" fill="currentColor" text-anchor="middle">30</text>
<text x="542.4" y="183.1" font-size="9.8" letter-spacing="0.95" stroke-width="0.25" stroke="currentColor" style="color:#6e6e6e" fill="currentColor" text-anchor="middle">40</text>
<text x="603.4" y="183.1" font-size="9.8" letter-spacing="0.95" stroke-width="0.25" stroke="currentColor" style="color:#6e6e6e" fill="currentColor" text-anchor="middle">50</text>
<text x="664.4" y="183.1" font-size="9.8" letter-spacing="0.95" stroke-width="0.25" stroke="currentColor" style="color:#6e6e6e" fill="currentColor" text-anchor="middle">60</text>
<text x="725.4" y="183.1" font-size="9.8" letter-spacing="0.95" stroke-width="0.25" stroke="currentColor" style="color:#6e6e6e" fill="currentColor" text-anchor="middle">70</text>
<text x="786.4" y="183.1" font-size="9.8" letter-spacing="0.95" stroke-width="0.25" stroke="currentColor" style="color:#6e6e6e" fill="currentColor" text-anchor="middle">80</text>
<text x="847.4" y="183.1" font-size="9.8" letter-spacing="0.95" stroke-width="0.25" stroke="currentColor" style="color:#6e6e6e" fill="currentColor" text-anchor="middle">90</text>
<text x="906.5" y="183.1" font-size="9.8" letter-spacing="0.95" stroke-width="0.25" stroke="currentColor" style="color:#6e6e6e" fill="currentColor" text-anchor="end">100</text>
<rect x="236.2" y="167.60" width="1.6" height="3.6" fill="#e8e8e8"/>
<rect x="236.2" y="186.90" width="1.6" height="3.6" fill="#e8e8e8"/>
<rect x="267.0" y="168.80" width="1" height="2" fill="#9a9a9a"/>
<rect x="267.0" y="187.30" width="1" height="2" fill="#9a9a9a"/>
<rect x="297.2" y="167.60" width="1.6" height="3.6" fill="#e8e8e8"/>
<rect x="297.2" y="186.90" width="1.6" height="3.6" fill="#e8e8e8"/>
<rect x="328.0" y="168.80" width="1" height="2" fill="#9a9a9a"/>
<rect x="328.0" y="187.30" width="1" height="2" fill="#9a9a9a"/>
<rect x="358.2" y="167.60" width="1.6" height="3.6" fill="#e8e8e8"/>
<rect x="358.2" y="186.90" width="1.6" height="3.6" fill="#e8e8e8"/>
<rect x="389.0" y="168.80" width="1" height="2" fill="#9a9a9a"/>
<rect x="389.0" y="187.30" width="1" height="2" fill="#9a9a9a"/>
<rect x="419.2" y="167.60" width="1.6" height="3.6" fill="#e8e8e8"/>
<rect x="419.2" y="186.90" width="1.6" height="3.6" fill="#e8e8e8"/>
<rect x="450.0" y="168.80" width="1" height="2" fill="#9a9a9a"/>
<rect x="450.0" y="187.30" width="1" height="2" fill="#9a9a9a"/>
<rect x="480.2" y="167.60" width="1.6" height="3.6" fill="#e8e8e8"/>
<rect x="480.2" y="186.90" width="1.6" height="3.6" fill="#e8e8e8"/>
<rect x="511.0" y="168.80" width="1" height="2" fill="#9a9a9a"/>
<rect x="511.0" y="187.30" width="1" height="2" fill="#9a9a9a"/>
<rect x="541.2" y="167.60" width="1.6" height="3.6" fill="#e8e8e8"/>
<rect x="541.2" y="186.90" width="1.6" height="3.6" fill="#e8e8e8"/>
<rect x="572.0" y="168.80" width="1" height="2" fill="#9a9a9a"/>
<rect x="572.0" y="187.30" width="1" height="2" fill="#9a9a9a"/>
<rect x="602.2" y="167.60" width="1.6" height="3.6" fill="#e8e8e8"/>
<rect x="602.2" y="186.90" width="1.6" height="3.6" fill="#e8e8e8"/>
<rect x="633.0" y="168.80" width="1" height="2" fill="#9a9a9a"/>
<rect x="633.0" y="187.30" width="1" height="2" fill="#9a9a9a"/>
<rect x="663.2" y="167.60" width="1.6" height="3.6" fill="#e8e8e8"/>
<rect x="663.2" y="186.90" width="1.6" height="3.6" fill="#e8e8e8"/>
<rect x="694.0" y="168.80" width="1" height="2" fill="#9a9a9a"/>
<rect x="694.0" y="187.30" width="1" height="2" fill="#9a9a9a"/>
<rect x="724.2" y="167.60" width="1.6" height="3.6" fill="#e8e8e8"/>
<rect x="724.2" y="186.90" width="1.6" height="3.6" fill="#e8e8e8"/>
<rect x="755.0" y="168.80" width="1" height="2" fill="#9a9a9a"/>
<rect x="755.0" y="187.30" width="1" height="2" fill="#9a9a9a"/>
<rect x="785.2" y="167.60" width="1.6" height="3.6" fill="#e8e8e8"/>
<rect x="785.2" y="186.90" width="1.6" height="3.6" fill="#e8e8e8"/>
<rect x="816.0" y="168.80" width="1" height="2" fill="#9a9a9a"/>
<rect x="816.0" y="187.30" width="1" height="2" fill="#9a9a9a"/>
<rect x="846.2" y="167.60" width="1.6" height="3.6" fill="#e8e8e8"/>
<rect x="846.2" y="186.90" width="1.6" height="3.6" fill="#e8e8e8"/>
<rect x="877.0" y="168.80" width="1" height="2" fill="#9a9a9a"/>
<rect x="877.0" y="187.30" width="1" height="2" fill="#9a9a9a"/>
<rect x="907.2" y="167.60" width="1.6" height="3.6" fill="#e8e8e8"/>
<rect x="907.2" y="186.90" width="1.6" height="3.6" fill="#e8e8e8"/>
<text x="239.0" y="203.6" font-size="9.8" letter-spacing="0.95" stroke-width="0.25" stroke="currentColor" style="color:#0a3f9a" fill="currentColor">-10</text>
<text x="298.4" y="203.6" font-size="9.8" letter-spacing="0.95" stroke-width="0.25" stroke="currentColor" style="color:#0a3f9a" fill="currentColor" text-anchor="middle">0</text>
<text x="359.4" y="203.6" font-size="9.8" letter-spacing="0.95" stroke-width="0.25" stroke="currentColor" style="color:#6e6e6e" fill="currentColor" text-anchor="middle">10</text>
<text x="420.4" y="203.6" font-size="9.8" letter-spacing="0.95" stroke-width="0.25" stroke="currentColor" style="color:#6e6e6e" fill="currentColor" text-anchor="middle">20</text>
<text x="481.4" y="203.6" font-size="9.8" letter-spacing="0.95" stroke-width="0.25" stroke="currentColor" style="color:#6e6e6e" fill="currentColor" text-anchor="middle">30</text>
<text x="542.4" y="203.6" font-size="9.8" letter-spacing="0.95" stroke-width="0.25" stroke="currentColor" style="color:#6e6e6e" fill="currentColor" text-anchor="middle">40</text>
<text x="603.4" y="203.6" font-size="9.8" letter-spacing="0.95" stroke-width="0.25" stroke="currentColor" style="color:#6e6e6e" fill="currentColor" text-anchor="middle">50</text>
<text x="664.4" y="203.6" font-size="9.8" letter-spacing="0.95" stroke-width="0.25" stroke="currentColor" style="color:#6e6e6e" fill="currentColor" text-anchor="middle">60</text>
<text x="725.4" y="203.6" font-size="9.8" letter-spacing="0.95" stroke-width="0.25" stroke="currentColor" style="color:#6e6e6e" fill="currentColor" text-anchor="middle">70</text>
<text x="786.4" y="203.6" font-size="9.8" letter-spacing="0.95" stroke-width="0.25" stroke="currentColor" style="color:#6e6e6e" fill="currentColor" text-anchor="middle">80</text>
<text x="847.4" y="203.6" font-size="9.8" letter-spacing="0.95" stroke-width="0.25" stroke="currentColor" style="color:#6e6e6e" fill="currentColor" text-anchor="middle">90</text>
<text x="906.5" y="203.6" font-size="9.8" letter-spacing="0.95" stroke-width="0.25" stroke="currentColor" style="color:#6e6e6e" fill="currentColor" text-anchor="end">100</text>
<rect x="236.2" y="188.05" width="1.6" height="3.6" fill="#e8e8e8"/>
<rect x="236.2" y="207.35" width="1.6" height="3.6" fill="#e8e8e8"/>
<rect x="267.0" y="189.25" width="1" height="2" fill="#9a9a9a"/>
<rect x="267.0" y="207.75" width="1" height="2" fill="#9a9a9a"/>
<rect x="297.2" y="188.05" width="1.6" height="3.6" fill="#e8e8e8"/>
<rect x="297.2" y="207.35" width="1.6" height="3.6" fill="#e8e8e8"/>
<rect x="328.0" y="189.25" width="1" height="2" fill="#9a9a9a"/>
<rect x="328.0" y="207.75" width="1" height="2" fill="#9a9a9a"/>
<rect x="358.2" y="188.05" width="1.6" height="3.6" fill="#e8e8e8"/>
<rect x="358.2" y="207.35" width="1.6" height="3.6" fill="#e8e8e8"/>
<rect x="389.0" y="189.25" width="1" height="2" fill="#9a9a9a"/>
<rect x="389.0" y="207.75" width="1" height="2" fill="#9a9a9a"/>
<rect x="419.2" y="188.05" width="1.6" height="3.6" fill="#e8e8e8"/>
<rect x="419.2" y="207.35" width="1.6" height="3.6" fill="#e8e8e8"/>
<rect x="450.0" y="189.25" width="1" height="2" fill="#9a9a9a"/>
<rect x="450.0" y="207.75" width="1" height="2" fill="#9a9a9a"/>
<rect x="480.2" y="188.05" width="1.6" height="3.6" fill="#e8e8e8"/>
<rect x="480.2" y="207.35" width="1.6" height="3.6" fill="#e8e8e8"/>
<rect x="511.0" y="189.25" width="1" height="2" fill="#9a9a9a"/>
<rect x="511.0" y="207.75" width="1" height="2" fill="#9a9a9a"/>
<rect x="541.2" y="188.05" width="1.6" height="3.6" fill="#e8e8e8"/>
<rect x="541.2" y="207.35" width="1.6" height="3.6" fill="#e8e8e8"/>
<rect x="572.0" y="189.25" width="1" height="2" fill="#9a9a9a"/>
<rect x="572.0" y="207.75" width="1" height="2" fill="#9a9a9a"/>
<rect x="602.2" y="188.05" width="1.6" height="3.6" fill="#e8e8e8"/>
<rect x="602.2" y="207.35" width="1.6" height="3.6" fill="#e8e8e8"/>
<rect x="633.0" y="189.25" width="1" height="2" fill="#9a9a9a"/>
<rect x="633.0" y="207.75" width="1" height="2" fill="#9a9a9a"/>
<rect x="663.2" y="188.05" width="1.6" height="3.6" fill="#e8e8e8"/>
<rect x="663.2" y="207.35" width="1.6" height="3.6" fill="#e8e8e8"/>
<rect x="694.0" y="189.25" width="1" height="2" fill="#9a9a9a"/>
<rect x="694.0" y="207.75" width="1" height="2" fill="#9a9a9a"/>
<rect x="724.2" y="188.05" width="1.6" height="3.6" fill="#e8e8e8"/>
<rect x="724.2" y="207.35" width="1.6" height="3.6" fill="#e8e8e8"/>
<rect x="755.0" y="189.25" width="1" height="2" fill="#9a9a9a"/>
<rect x="755.0" y="207.75" width="1" height="2" fill="#9a9a9a"/>
<rect x="785.2" y="188.05" width="1.6" height="3.6" fill="#e8e8e8"/>
<rect x="785.2" y="207.35" width="1.6" height="3.6" fill="#e8e8e8"/>
<rect x="816.0" y="189.25" width="1" height="2" fill="#9a9a9a"/>
<rect x="816.0" y="207.75" width="1" height="2" fill="#9a9a9a"/>
<rect x="846.2" y="188.05" width="1.6" height="3.6" fill="#e8e8e8"/>
<rect x="846.2" y="207.35" width="1.6" height="3.6" fill="#e8e8e8"/>
<rect x="877.0" y="189.25" width="1" height="2" fill="#9a9a9a"/>
<rect x="877.0" y="207.75" width="1" height="2" fill="#9a9a9a"/>
<rect x="907.2" y="188.05" width="1.6" height="3.6" fill="#e8e8e8"/>
<rect x="907.2" y="207.35" width="1.6" height="3.6" fill="#e8e8e8"/>
<rect x="431.2" y="129.9" width="1.2" height="16.5" fill="#d8a800"/>
<rect x="372" y="149.6" width="1" height="18" fill="#ff50e8"/>
<rect x="332.5" y="169.8" width="1" height="18.6" fill="#d8d8d8"/>
<rect x="337.4" y="189.5" width="1.2" height="19.8" fill="#0a60f0"/>
<line x1="3" x2="909" y1="417.5" y2="417.5" stroke="#525252" stroke-width="1"/>
<rect x="3.2" y="411.5" width="43.8" height="11" fill="#030303"/>
<text x="7" y="421.0" font-size="9.5" fill="#666">10 dBµV</text>
<line x1="3" x2="909" y1="396.5" y2="396.5" stroke="#525252" stroke-width="1"/>
<rect x="3.2" y="390.5" width="43.8" height="11" fill="#030303"/>
<text x="7" y="400.0" font-size="9.5" fill="#666">20 dBµV</text>
<line x1="3" x2="909" y1="376.5" y2="376.5" stroke="#525252" stroke-width="1"/>
<rect x="3.2" y="370.5" width="43.8" height="11" fill="#030303"/>
<text x="7" y="380.0" font-size="9.5" fill="#666">30 dBµV</text>
<line x1="3" x2="909" y1="355.5" y2="355.5" stroke="#525252" stroke-width="1"/>
<rect x="3.2" y="349.5" width="43.8" height="11" fill="#030303"/>
<text x="7" y="359.0" font-size="9.5" fill="#666">40 dBµV</text>
<line x1="3" x2="909" y1="335.5" y2="335.5" stroke="#525252" stroke-width="1"/>
<rect x="3.2" y="329.5" width="43.8" height="11" fill="#030303"/>
<text x="7" y="339.0" font-size="9.5" fill="#666">50 dBµV</text>
<line x1="3" x2="909" y1="314.5" y2="314.5" stroke="#525252" stroke-width="1"/>
<rect x="3.2" y="308.5" width="43.8" height="11" fill="#030303"/>
<text x="7" y="318.0" font-size="9.5" fill="#666">60 dBµV</text>
<line x1="3" x2="909" y1="294.5" y2="294.5" stroke="#525252" stroke-width="1"/>
<rect x="3.2" y="288.5" width="43.8" height="11" fill="#030303"/>
<text x="7" y="298.0" font-size="9.5" fill="#666">70 dBµV</text>
<line x1="3" x2="909" y1="273.5" y2="273.5" stroke="#525252" stroke-width="1"/>
<rect x="3.2" y="267.5" width="43.8" height="11" fill="#030303"/>
<text x="7" y="277.0" font-size="9.5" fill="#666">80 dBµV</text>
<line x1="3" x2="909" y1="253.5" y2="253.5" stroke="#525252" stroke-width="1"/>
<rect x="3.2" y="247.5" width="43.8" height="11" fill="#030303"/>
<text x="7" y="257.0" font-size="9.5" fill="#666">90 dBµV</text>
<line x1="52.5" x2="52.5" y1="233" y2="436" stroke="#686868" stroke-width="1" stroke-dasharray="2 2"/>
<line x1="121.5" x2="121.5" y1="233" y2="436" stroke="#686868" stroke-width="1" stroke-dasharray="2 2"/>
<line x1="170.5" x2="170.5" y1="233" y2="436" stroke="#686868" stroke-width="1" stroke-dasharray="2 2"/>
<line x1="208.5" x2="208.5" y1="233" y2="436" stroke="#686868" stroke-width="1" stroke-dasharray="2 2"/>
<line x1="240.5" x2="240.5" y1="233" y2="436" stroke="#686868" stroke-width="1" stroke-dasharray="2 2"/>
<line x1="266.5" x2="266.5" y1="233" y2="436" stroke="#686868" stroke-width="1" stroke-dasharray="2 2"/>
<line x1="289.5" x2="289.5" y1="233" y2="436" stroke="#686868" stroke-width="1" stroke-dasharray="2 2"/>
<line x1="309.5" x2="309.5" y1="233" y2="436" stroke="#686868" stroke-width="1" stroke-dasharray="2 2"/>
<line x1="446.5" x2="446.5" y1="233" y2="436" stroke="#686868" stroke-width="1" stroke-dasharray="2 2"/>
<line x1="515.5" x2="515.5" y1="233" y2="436" stroke="#686868" stroke-width="1" stroke-dasharray="2 2"/>
<line x1="564.5" x2="564.5" y1="233" y2="436" stroke="#686868" stroke-width="1" stroke-dasharray="2 2"/>
<line x1="602.5" x2="602.5" y1="233" y2="436" stroke="#686868" stroke-width="1" stroke-dasharray="2 2"/>
<line x1="634.5" x2="634.5" y1="233" y2="436" stroke="#686868" stroke-width="1" stroke-dasharray="2 2"/>
<line x1="660.5" x2="660.5" y1="233" y2="436" stroke="#686868" stroke-width="1" stroke-dasharray="2 2"/>
<line x1="683.5" x2="683.5" y1="233" y2="436" stroke="#686868" stroke-width="1" stroke-dasharray="2 2"/>
<line x1="703.5" x2="703.5" y1="233" y2="436" stroke="#686868" stroke-width="1" stroke-dasharray="2 2"/>
<line x1="840.5" x2="840.5" y1="233" y2="436" stroke="#686868" stroke-width="1" stroke-dasharray="2 2"/>
<line x1="327.5" x2="327.5" y1="245.5" y2="436" stroke="#707070" stroke-width="1"/>
<line x1="721.5" x2="721.5" y1="245.5" y2="436" stroke="#707070" stroke-width="1"/>
<rect x="312" y="233" width="29" height="12.5" fill="#030303"/><text x="313.5" y="243" font-size="9" fill="#6c6c6c">1 MHz</text>
<rect x="702" y="233" width="38" height="13" fill="#030303"/><text x="704.4" y="243" font-size="9" fill="#6c6c6c">10 MHz</text>
<rect x="763" y="233" width="146.5" height="30.5" fill="#030303"/>
<rect x="2" y="232" width="1.1" height="205.5" fill="#168a94"/>
<polyline points="3.0,301.9 208.4,322.4 602.4,322.4 602.4,314.2 909.0,314.2" fill="none" stroke="#c8401a" stroke-width="1.3"/>
<polyline points="3.0,322.4 208.4,342.8 602.4,342.8 602.4,334.6 909.0,334.6" fill="none" stroke="#c8401a" stroke-width="1.3"/>
<polyline points="2.5,372.3 3.0,372.9 3.5,373.5 4.0,374.1 4.5,374.5 5.0,374.8 5.5,375.4 6.0,376.0 6.5,376.7 7.0,377.0 7.5,377.4 8.0,377.8 8.5,378.5 9.0,378.6 9.5,377.9 10.0,377.1 10.5,376.4 11.0,375.9 11.5,375.4 12.0,374.7 12.5,374.0 13.0,373.4 13.5,372.9 14.0,372.3 14.5,371.8 15.0,371.1 15.5,371.2 16.0,371.4 16.5,371.6 17.0,371.8 17.5,371.9 18.0,372.0 18.5,372.3 19.0,372.2 19.5,371.6 20.0,370.6 20.5,369.6 21.0,368.8 21.5,368.1 22.0,367.4 22.5,366.6 23.0,365.7 23.5,364.9 24.0,364.1 24.5,363.4 25.0,362.5 25.5,361.2 26.0,359.8 26.5,358.7 27.0,357.5 27.5,356.3 28.0,355.0 28.5,353.6 29.0,352.4 29.5,351.3 30.0,350.1 30.5,348.7 31.0,347.4 31.5,346.1 32.0,345.0 32.5,343.9 33.0,342.1 33.5,340.4 34.0,338.7 34.5,337.2 35.0,335.7 35.5,334.0 36.0,332.3 36.5,330.6 37.0,329.1 37.5,327.6 38.0,326.2 38.5,324.7 39.0,323.2 39.5,321.9 40.0,320.6 40.5,319.2 41.0,317.7 41.5,316.2 42.0,314.9 42.5,316.3 43.0,317.6 43.5,318.7 44.0,319.8 44.5,321.0 45.0,322.4 45.5,323.8 46.0,325.1 46.5,326.8 47.0,328.5 47.5,330.3 48.0,332.0 48.5,333.7 49.0,335.3 49.5,337.0 50.0,338.8 50.5,339.8 51.0,340.8 51.5,341.6 52.0,342.5 52.5,343.6 53.0,344.7 53.5,345.8 54.0,346.7 54.5,347.6 55.0,348.7 55.5,349.5 56.0,350.3 56.5,350.9 57.0,351.6 57.5,352.4 58.0,353.3 58.5,354.2 59.0,354.9 59.5,355.5 60.0,356.2 60.5,356.0 61.0,355.9 61.5,355.5 62.0,355.1 62.5,354.7 63.0,354.6 63.5,354.5 64.0,354.2 64.5,353.8 65.0,354.1 65.5,354.6 66.0,355.2 66.5,355.6 67.0,356.0 67.5,356.3 68.0,356.8 68.5,357.4 69.0,357.2 69.5,356.2 70.0,355.2 70.5,354.4 71.0,353.6 71.5,352.8 72.0,351.8 72.5,350.8 73.0,349.9 73.5,349.2 74.0,348.2 74.5,346.7 75.0,345.2 75.5,343.7 76.0,342.4 76.5,341.1 77.0,339.6 77.5,338.1 78.0,336.5 78.5,335.2 79.0,333.8 79.5,332.4 80.0,330.9 80.5,329.3 81.0,327.9 81.5,326.5 82.0,325.0 82.5,323.4 83.0,321.8 83.5,320.4 84.0,319.0 84.5,317.7 85.0,316.1 85.5,317.8 86.0,319.6 86.5,321.6 87.0,323.6 87.5,325.4 88.0,327.2 88.5,329.0 89.0,330.9 89.5,332.7 90.0,334.4 90.5,336.0 91.0,337.6 91.5,339.6 92.0,341.5 92.5,343.3 93.0,344.9 93.5,346.5 94.0,348.2 94.5,349.8 95.0,351.4 95.5,352.8 96.0,354.1 96.5,355.7 97.0,357.3 97.5,358.9 98.0,360.3 98.5,361.8 99.0,362.6 99.5,362.8 100.0,363.0 100.5,363.1 101.0,363.1 101.5,363.2 102.0,363.5 102.5,363.9 103.0,364.4 103.5,364.8 104.0,365.3 104.5,365.9 105.0,366.6 105.5,367.2 106.0,367.7 106.5,368.2 107.0,368.9 107.5,369.6 108.0,368.5 108.5,367.1 109.0,365.7 109.5,364.5 110.0,363.5 110.5,362.4 111.0,361.1 111.5,359.8 112.0,358.6 112.5,357.5 113.0,355.3 113.5,352.9 114.0,350.4 114.5,348.0 115.0,345.8 115.5,343.6 116.0,341.3 116.5,338.8 117.0,336.4 117.5,334.2 118.0,332.1 118.5,329.8 119.0,327.4 119.5,324.9 120.0,327.5 120.5,330.0 121.0,332.6 121.5,335.1 122.0,337.5 122.5,340.0 123.0,342.1 123.5,344.1 124.0,346.0 124.5,347.9 125.0,349.9 125.5,352.0 126.0,354.2 126.5,355.6 127.0,356.5 127.5,357.4 128.0,358.5 128.5,359.7 129.0,360.6 129.5,361.5 130.0,362.3 130.5,362.6 131.0,362.9 131.5,363.1 132.0,363.2 132.5,363.2 133.0,363.4 133.5,363.6 134.0,364.2 134.5,365.0 135.0,365.9 135.5,366.8 136.0,367.7 136.5,368.7 137.0,369.6 137.5,370.4 138.0,371.3 138.5,370.4 139.0,369.5 139.5,368.4 140.0,367.2 140.5,366.2 141.0,365.4 141.5,364.5 142.0,363.5 142.5,362.4 143.0,359.9 143.5,357.7 144.0,355.5 144.5,353.2 145.0,350.8 145.5,348.4 146.0,346.1 146.5,344.0 147.0,341.8 147.5,339.4 148.0,337.1 148.5,337.1 149.0,339.6 149.5,342.0 150.0,344.2 150.5,346.4 151.0,348.4 151.5,350.2 152.0,352.1 152.5,353.8 153.0,355.4 153.5,357.1 154.0,359.0 154.5,360.8 155.0,362.6 155.5,362.9 156.0,363.3 156.5,364.0 157.0,364.6 157.5,365.1 158.0,365.5 158.5,365.8 159.0,366.4 159.5,367.0 160.0,367.6 160.5,368.3 161.0,369.0 161.5,369.7 162.0,370.6 162.5,371.4 163.0,372.1 163.5,372.9 164.0,373.7 164.5,374.6 165.0,375.5 165.5,376.2 166.0,374.7 166.5,373.3 167.0,372.0 167.5,370.7 168.0,369.3 168.5,367.7 169.0,366.2 169.5,364.9 170.0,363.2 170.5,361.4 171.0,359.5 171.5,357.5 172.0,355.7 172.5,353.8 173.0,355.7 173.5,357.5 174.0,359.2 174.5,361.1 175.0,363.1 175.5,365.1 176.0,366.4 176.5,367.7 177.0,369.1 177.5,370.6 178.0,372.0 178.5,373.4 179.0,374.7 179.5,376.0 180.0,377.5 180.5,377.4 181.0,377.3 181.5,377.0 182.0,376.7 182.5,376.6 183.0,376.6 183.5,376.4 184.0,376.2 184.5,375.9 185.0,375.9 185.5,374.4 186.0,372.9 186.5,371.2 187.0,369.5 187.5,368.0 188.0,366.5 188.5,365.0 189.0,363.3 189.5,361.6 190.0,360.0 190.5,357.9 191.0,355.8 191.5,353.5 192.0,351.2 192.5,348.9 193.0,346.8 193.5,344.8 194.0,342.6 194.5,344.6 195.0,346.7 195.5,348.9 196.0,351.2 196.5,353.4 197.0,355.5 197.5,357.5 198.0,359.0 198.5,360.6 199.0,362.1 199.5,363.5 200.0,364.9 200.5,366.4 201.0,368.0 201.5,369.5 202.0,371.0 202.5,372.5 203.0,373.0 203.5,373.6 204.0,374.2 204.5,374.6 205.0,375.0 205.5,375.4 206.0,376.0 206.5,376.6 207.0,377.1 207.5,377.4 208.0,375.4 208.5,373.6 209.0,371.8 209.5,369.9 210.0,367.8 210.5,365.8 211.0,363.7 211.5,361.5 212.0,359.3 212.5,356.9 213.0,354.5 213.5,357.1 214.0,359.8 214.5,362.4 215.0,364.9 215.5,367.4 216.0,369.0 216.5,370.6 217.0,372.2 217.5,373.7 218.0,375.2 218.5,376.7 219.0,377.4 219.5,377.2 220.0,376.9 220.5,376.6 221.0,376.3 221.5,376.1 222.0,376.0 222.5,375.8 223.0,375.4 223.5,375.0 224.0,374.1 224.5,372.5 225.0,370.8 225.5,369.1 226.0,367.3 226.5,365.7 227.0,364.2 227.5,362.7 228.0,360.2 228.5,357.8 229.0,355.4 229.5,353.3 230.0,351.1 230.5,353.9 231.0,356.6 231.5,359.4 232.0,362.2 232.5,365.1 233.0,367.6 233.5,370.0 234.0,372.5 234.5,375.1 235.0,377.6 235.5,380.1 236.0,382.4 236.5,383.6 237.0,383.8 237.5,384.1 238.0,384.3 238.5,384.3 239.0,384.3 239.5,384.4 240.0,384.6 240.5,383.6 241.0,382.2 241.5,380.9 242.0,379.7 242.5,378.6 243.0,377.6 243.5,374.2 244.0,370.7 244.5,367.3 245.0,364.0 245.5,366.7 246.0,369.4 246.5,372.0 247.0,374.7 247.5,377.4 248.0,379.1 248.5,380.8 249.0,382.5 249.5,384.1 250.0,385.8 250.5,387.5 251.0,389.2 251.5,389.5 252.0,388.4 252.5,387.4 253.0,386.5 253.5,385.6 254.0,384.5 254.5,383.4 255.0,382.4 255.5,379.0 256.0,375.6 256.5,372.1 257.0,368.5 257.5,364.9 258.0,362.2 258.5,359.5 259.0,356.7 259.5,353.9 260.0,351.0 260.5,353.9 261.0,356.8 261.5,359.6 262.0,362.2 262.5,364.8 263.0,366.2 263.5,367.6 264.0,369.1 264.5,370.4 265.0,371.7 265.5,373.0 266.0,374.3 266.5,374.3 267.0,373.0 267.5,371.7 268.0,370.4 268.5,369.1 269.0,367.8 269.5,366.4 270.0,365.0 270.5,363.6 271.0,362.3 271.5,361.1 272.0,359.7 272.5,358.3 273.0,356.8 273.5,356.9 274.0,358.3 274.5,359.6 275.0,360.7 275.5,361.8 276.0,363.1 276.5,364.0 277.0,364.5 277.5,364.7 278.0,364.9 278.5,365.2 279.0,365.6 279.5,365.9 280.0,366.2 280.5,364.9 281.0,363.7 281.5,362.7 282.0,361.7 282.5,360.4 283.0,359.1 283.5,357.8 284.0,356.7 284.5,355.6 285.0,354.5 285.5,355.8 286.0,357.1 286.5,358.6 287.0,360.1 287.5,361.5 288.0,362.8 288.5,364.1 289.0,365.0 289.5,365.4 290.0,365.6 290.5,365.6 291.0,365.6 291.5,365.8 292.0,366.1 292.5,366.3 293.0,365.1 293.5,364.0 294.0,362.8 294.5,361.8 295.0,360.7 295.5,359.5 296.0,358.2 296.5,356.9 297.0,358.9 297.5,360.9 298.0,362.7 298.5,364.4 299.0,366.2 299.5,368.1 300.0,370.0 300.5,371.2 301.0,372.2 301.5,373.2 302.0,374.3 302.5,375.5 303.0,376.6 303.5,377.6 304.0,378.6 304.5,379.8 305.0,381.0 305.5,382.2 306.0,383.3 306.5,383.4 307.0,382.7 307.5,382.1 308.0,381.4 308.5,380.6 309.0,379.8 309.5,379.0 310.0,378.4 310.5,377.9 311.0,377.1 311.5,376.3 312.0,375.5 312.5,374.9 313.0,374.1 313.5,373.2 314.0,372.2 314.5,371.2 315.0,370.4 315.5,369.6 316.0,368.8 316.5,367.8 317.0,366.8 317.5,365.9 318.0,365.0 318.5,366.4 319.0,367.6 319.5,368.9 320.0,370.2 320.5,371.7 321.0,373.2 321.5,374.1 322.0,374.5 322.5,374.9 323.0,375.5 323.5,376.1 324.0,375.6 324.5,374.2 325.0,372.7 325.5,371.5 326.0,370.3 326.5,369.0 327.0,367.5 327.5,368.6 328.0,369.9 328.5,371.3 329.0,372.7 329.5,373.8 330.0,374.9 330.5,376.1 331.0,376.3 331.5,376.4 332.0,376.3 332.5,376.1 333.0,376.1 333.5,375.1 334.0,374.0 334.5,372.8 335.0,371.5 335.5,370.3 336.0,369.3 336.5,369.4 337.0,370.6 337.5,371.6 338.0,372.6 338.5,373.9 339.0,375.2 339.5,376.4 340.0,377.5 340.5,377.6 341.0,377.9 341.5,378.2 342.0,378.5 342.5,378.7 343.0,377.1 343.5,375.6 344.0,374.1 344.5,372.7 345.0,374.5 345.5,376.4 346.0,378.3 346.5,380.4 347.0,382.5 347.5,384.3 348.0,386.1 348.5,384.2 349.0,382.5 349.5,380.8 350.0,378.9 350.5,377.0 351.0,375.0 351.5,373.3 352.0,373.1 352.5,374.3 353.0,375.3 353.5,376.3 354.0,377.6 354.5,378.9 355.0,380.2 355.5,379.6 356.0,379.0 356.5,378.5 357.0,378.0 357.5,377.6 358.0,375.5 358.5,373.4 359.0,371.4 359.5,369.5 360.0,367.6 360.5,365.5 361.0,363.4 361.5,363.1 362.0,364.7 362.5,366.3 363.0,367.8 363.5,369.1 364.0,368.6 364.5,366.5 365.0,364.4 365.5,362.2 366.0,359.9 366.5,359.6 367.0,361.5 367.5,363.5 368.0,365.4 368.5,367.0 369.0,368.7 369.5,370.5 370.0,372.6 370.5,371.7 371.0,370.5 371.5,369.4 372.0,368.3 372.5,367.4 373.0,366.5 373.5,365.4 374.0,364.3 374.5,364.6 375.0,366.2 375.5,367.8 376.0,369.4 376.5,370.9 377.0,372.5 377.5,371.5 378.0,370.5 378.5,369.4 379.0,368.4 379.5,367.3 380.0,366.3 380.5,367.6 381.0,368.9 381.5,370.0 382.0,371.1 382.5,372.3 383.0,373.7 383.5,374.0 384.0,374.0 384.5,373.9 385.0,371.6 385.5,368.5 386.0,364.8 386.5,368.6 387.0,372.0 387.5,374.7 388.0,375.5 388.5,377.2 389.0,373.5 389.5,369.9 390.0,365.5 390.5,366.5 391.0,370.9 391.5,374.7 392.0,375.8 392.5,375.1 393.0,376.5 393.5,378.3 394.0,375.4 394.5,373.0 395.0,370.0 395.5,370.7 396.0,373.7 396.5,376.2 397.0,377.6 397.5,376.0 398.0,375.7 398.5,376.1 399.0,372.5 399.5,368.2 400.0,367.2 400.5,371.8 401.0,375.7 401.5,380.2 402.0,379.9 402.5,377.7 403.0,375.2 403.5,371.7 404.0,367.7 404.5,371.8 405.0,375.4 405.5,378.1 406.0,379.3 406.5,381.2 407.0,377.7 407.5,376.1 408.0,374.1 408.5,374.6 409.0,376.6 409.5,378.3 410.0,379.3 410.5,378.7 411.0,378.8 411.5,378.5 412.0,376.6 412.5,374.2 413.0,373.7 413.5,376.3 414.0,378.6 414.5,381.3 415.0,381.2 415.5,379.9 416.0,378.2 416.5,375.8 417.0,373.0 417.5,375.9 418.0,378.5 418.5,379.7 419.0,381.3 419.5,383.7 420.0,385.4 420.5,378.6 421.0,375.0 421.5,370.6 422.0,373.3 422.5,377.5 423.0,380.8 423.5,382.1 424.0,382.0 424.5,384.4 425.0,386.8 425.5,380.3 426.0,377.7 426.5,374.4 427.0,376.6 427.5,379.9 428.0,382.7 428.5,384.6 429.0,383.6 429.5,385.5 430.0,387.5 430.5,388.4 431.0,387.6 431.5,383.8 432.0,380.7 432.5,376.7 433.0,375.9 433.5,380.3 434.0,384.2 434.5,385.9 435.0,388.5 435.5,391.1 436.0,386.2 436.5,382.6 437.0,377.8 437.5,374.5 438.0,380.1 438.5,385.0 439.0,386.8 439.5,386.4 440.0,388.3 440.5,388.5 441.0,385.3 441.5,381.1 442.0,376.4 442.5,381.0 443.0,384.9 443.5,387.7 444.0,388.6 444.5,387.5 445.0,386.9 445.5,388.2 446.0,389.0 446.5,388.0 447.0,387.0 447.5,387.0 448.0,386.9 448.5,386.7 449.0,385.0 449.5,383.2 450.0,382.0 450.5,381.8 451.0,381.6 451.5,380.2 452.0,378.6 452.5,377.2 453.0,377.7 453.5,378.2 454.0,377.6 454.5,376.2 455.0,374.8 455.5,375.2 456.0,375.6 456.5,375.5 457.0,374.5 457.5,373.5 458.0,373.5 458.5,373.7 459.0,373.6 459.5,371.8 460.0,370.0 460.5,370.5 461.0,372.2 461.5,373.9 462.0,372.4 462.5,371.1 463.0,369.3 463.5,367.0 464.0,369.4 464.5,371.7 465.0,373.4 465.5,371.8 466.0,371.9 466.5,372.0 467.0,371.9 467.5,371.5 468.0,371.2 468.5,369.3 469.0,366.9 469.5,364.4 470.0,362.0 470.5,364.3 471.0,366.7 471.5,368.8 472.0,369.8 472.5,368.4 473.0,367.1 473.5,368.2 474.0,370.9 474.5,373.6 475.0,373.7 475.5,373.5 476.0,373.9 476.5,371.5 477.0,367.4 477.5,361.9 478.0,355.6 478.5,362.1 479.0,367.9 479.5,372.7 480.0,374.4 480.5,373.0 481.0,371.5 481.5,372.7 482.0,374.0 482.5,374.6 483.0,374.5 483.5,371.0 484.0,364.8 484.5,357.4 485.0,355.8 485.5,363.5 486.0,370.1 486.5,374.6 487.0,376.0 487.5,375.8 488.0,375.5 488.5,375.1 489.0,375.2 489.5,375.9 490.0,376.7 490.5,373.4 491.0,366.5 491.5,357.9 492.0,348.0 492.5,357.9 493.0,366.7 493.5,373.7 494.0,373.9 494.5,374.8 495.0,375.7 495.5,376.2 496.0,376.0 496.5,375.9 497.0,377.5 497.5,375.8 498.0,370.5 498.5,362.9 499.0,353.9 499.5,355.8 500.0,364.6 500.5,372.1 501.0,378.8 501.5,376.4 502.0,375.5 502.5,376.9 503.0,378.3 503.5,377.0 504.0,375.1 504.5,369.9 505.0,362.0 505.5,352.9 506.0,358.5 506.5,367.0 507.0,374.0 507.5,377.0 508.0,379.5 508.5,380.3 509.0,378.4 509.5,376.6 510.0,375.3 510.5,368.4 511.0,359.6 511.5,349.5 512.0,359.6 512.5,368.5 513.0,375.6 513.5,379.0 514.0,377.3 514.5,375.5 515.0,375.2 515.5,376.8 516.0,378.5 516.5,373.9 517.0,366.9 517.5,358.5 518.0,356.7 518.5,365.4 519.0,372.8 519.5,378.3 520.0,376.0 520.5,377.7 521.0,379.4 521.5,377.3 522.0,374.4 522.5,370.7 523.0,366.5 523.5,370.7 524.0,374.4 524.5,377.3 525.0,376.1 525.5,375.9 526.0,377.0 526.5,378.1 527.0,377.2 527.5,373.9 528.0,369.7 528.5,365.0 529.0,369.7 529.5,373.9 530.0,377.2 530.5,375.5 531.0,377.9 531.5,380.4 532.0,380.2 532.5,378.3 533.0,375.4 533.5,368.8 534.0,360.7 534.5,355.4 535.0,364.1 535.5,371.7 536.0,376.7 536.5,377.9 537.0,378.7 537.5,378.1 538.0,377.6 538.5,376.5 539.0,370.6 539.5,363.1 540.0,354.5 540.5,363.1 541.0,370.6 541.5,376.5 542.0,380.7 542.5,379.7 543.0,378.1 543.5,376.9 544.0,377.5 544.5,376.9 545.0,372.6 545.5,367.2 546.0,361.0 546.5,367.2 547.0,372.6 547.5,376.9 548.0,378.6 548.5,376.3 549.0,377.2 549.5,378.9 550.0,379.9 550.5,376.8 551.0,372.0 551.5,365.9 552.0,359.0 552.5,365.9 553.0,372.0 553.5,376.8 554.0,378.2 554.5,379.4 555.0,380.6 555.5,377.0 556.0,373.0 556.5,367.8 557.0,362.0 557.5,367.8 558.0,373.0 558.5,377.0 559.0,377.2 559.5,377.6 560.0,378.0 560.5,377.1 561.0,374.0 561.5,370.2 562.0,366.0 562.5,370.1 563.0,373.6 563.5,375.8 564.0,374.7 564.5,375.1 565.0,376.3 565.5,375.8 566.0,373.6 566.5,370.9 567.0,368.0 567.5,370.8 568.0,373.2 568.5,375.0 569.0,376.8 569.5,375.2 570.0,376.3 570.5,374.5 571.0,372.9 571.5,371.0 572.0,368.6 572.5,370.9 573.0,372.5 573.5,373.6 574.0,376.4 574.5,373.4 575.0,374.5 575.5,376.7 576.0,377.8 576.5,374.7 577.0,371.5 577.5,371.8 578.0,374.3 578.5,376.8 579.0,373.7 579.5,370.6 580.0,369.8 580.5,372.4 581.0,375.0 581.5,372.8 582.0,369.3 582.5,366.9 583.0,369.1 583.5,371.4 584.0,371.2 584.5,369.4 585.0,367.5 585.5,370.7 586.0,374.0 586.5,374.7 587.0,371.6 587.5,368.6 588.0,370.4 588.5,373.5 589.0,375.3 589.5,372.0 590.0,368.6 590.5,368.8 591.0,371.3 591.5,373.8 592.0,370.5 592.5,367.6 593.0,366.9 593.5,369.5 594.0,372.2 594.5,372.2 595.0,371.6 595.5,371.6 596.0,373.6 596.5,375.6 597.0,375.3 597.5,373.5 598.0,371.7 598.5,372.5 599.0,373.3 599.5,373.1 600.0,372.2 600.5,370.6 601.0,372.2 601.5,374.6 602.0,376.5 602.5,375.9 603.0,375.3 603.5,376.1 604.0,377.7 604.5,379.3 605.0,378.1 605.5,376.9 606.0,377.0 606.5,379.2 607.0,381.4 607.5,382.0 608.0,382.4 608.5,384.7 609.0,387.5 609.5,390.4 610.0,392.2 610.5,393.4 611.0,394.6 611.5,399.1 612.0,398.5 612.5,396.1 613.0,390.9 613.5,385.7 614.0,383.7 614.5,383.7 615.0,383.2 615.5,380.9 616.0,378.5 616.5,378.4 617.0,379.9 617.5,382.5 618.0,379.0 618.5,375.5 619.0,374.0 619.5,375.5 620.0,377.1 620.5,375.6 621.0,373.2 621.5,371.9 622.0,374.2 622.5,376.5 623.0,375.8 623.5,373.2 624.0,370.6 624.5,373.0 625.0,375.5 625.5,375.8 626.0,373.1 626.5,370.3 627.0,370.7 627.5,371.9 628.0,373.3 628.5,373.3 629.0,373.4 629.5,374.6 630.0,376.7 630.5,378.8 631.0,376.1 631.5,373.5 632.0,373.3 632.5,376.8 633.0,380.3 633.5,378.1 634.0,374.5 634.5,372.1 635.0,374.5 635.5,377.4 636.0,378.4 636.5,378.1 637.0,377.8 637.5,382.1 638.0,386.3 638.5,387.5 639.0,384.2 639.5,380.8 640.0,383.9 640.5,388.6 641.0,391.8 641.5,388.9 642.0,386.1 642.5,386.8 643.0,389.4 643.5,392.1 644.0,390.0 644.5,387.9 645.0,387.6 645.5,390.1 646.0,392.6 646.5,391.7 647.0,390.0 647.5,389.4 648.0,393.6 648.5,397.8 649.0,397.4 649.5,394.0 650.0,390.6 650.5,394.3 651.0,397.9 651.5,399.3 652.0,397.5 652.5,395.7 653.0,397.5 653.5,400.2 654.0,401.9 654.5,399.7 655.0,397.6 655.5,398.0 656.0,400.1 656.5,402.3 657.0,400.1 657.5,398.0 658.0,397.5 658.5,400.0 659.0,402.6 659.5,401.3 660.0,399.0 660.5,398.1 661.0,399.0 661.5,399.8 662.0,399.3 662.5,397.9 663.0,396.6 663.5,397.4 664.0,398.2 664.5,398.1 665.0,396.5 665.5,395.2 666.0,396.3 666.5,398.0 667.0,399.1 667.5,397.4 668.0,395.7 668.5,395.7 669.0,396.7 669.5,397.7 670.0,396.2 670.5,394.8 671.0,394.8 671.5,396.9 672.0,399.1 672.5,397.5 673.0,395.1 673.5,393.4 674.0,395.3 674.5,397.2 675.0,397.1 675.5,395.7 676.0,394.3 676.5,395.1 677.0,395.9 677.5,396.0 678.0,395.1 678.5,394.2 679.0,394.4 679.5,395.0 680.0,395.3 680.5,394.4 681.0,393.5 681.5,393.9 682.0,395.2 682.5,396.5 683.0,395.4 683.5,394.4 684.0,394.0 684.5,394.5 685.0,395.1 685.5,394.0 686.0,392.5 686.5,391.7 687.0,393.2 687.5,394.7 688.0,394.4 688.5,392.8 689.0,391.3 689.5,393.1 690.0,394.9 690.5,395.6 691.0,394.0 691.5,392.5 692.0,393.0 692.5,394.0 693.0,394.7 693.5,394.1 694.0,393.5 694.5,394.3 695.0,395.8 695.5,397.3 696.0,396.8 696.5,396.2 697.0,396.3 697.5,397.1 698.0,398.0 698.5,397.6 699.0,396.9 699.5,396.6 700.0,397.7 700.5,398.7 701.0,398.9 701.5,398.5 702.0,398.0 702.5,398.3 703.0,398.5 703.5,398.6 704.0,398.3 704.5,398.1 705.0,398.5 705.5,399.1 706.0,399.4 706.5,398.6 707.0,397.8 707.5,398.5 708.0,399.9 708.5,401.3 709.0,399.3 709.5,397.3 710.0,396.9 710.5,398.9 711.0,400.9 711.5,400.7 712.0,400.1 712.5,399.6 713.0,399.6 713.5,399.7 714.0,399.2 714.5,398.4 715.0,398.4 715.5,399.4 716.0,400.4 716.5,400.9 717.0,400.5 717.5,400.1 718.0,400.7 718.5,401.5 719.0,402.2 719.5,402.1 720.0,402.1 720.5,402.5 721.0,403.3 721.5,404.2 722.0,403.8 722.5,403.5 723.0,403.6 723.5,404.3 724.0,405.0 724.5,405.0 725.0,404.9 725.5,404.9 726.0,405.6 726.5,406.4 727.0,406.4 727.5,405.8 728.0,405.2 728.5,406.1 729.0,407.1 729.5,407.4 730.0,406.9 730.5,406.5 731.0,406.8 731.5,407.3 732.0,407.6 732.5,407.4 733.0,407.2 733.5,407.6 734.0,408.4 734.5,409.2 735.0,409.2 735.5,408.9 736.0,408.9 736.5,409.3 737.0,409.7 737.5,409.3 738.0,408.7 738.5,408.3 739.0,408.9 739.5,409.4 740.0,409.2 740.5,408.6 741.0,408.0 741.5,408.5 742.0,409.1 742.5,409.2 743.0,408.7 743.5,408.2 744.0,408.3 744.5,408.6 745.0,408.7 745.5,408.4 746.0,408.0 746.5,408.1 747.0,408.5 747.5,409.0 748.0,408.5 748.5,408.0 749.0,407.9 749.5,408.3 750.0,408.8 750.5,408.3 751.0,407.6 751.5,407.1 752.0,407.7 752.5,408.4 753.0,408.3 753.5,407.8 754.0,407.3 754.5,407.8 755.0,408.3 755.5,408.2 756.0,407.4 756.5,406.6 757.0,407.0 757.5,407.7 758.0,408.2 758.5,407.4 759.0,406.7 759.5,406.7 760.0,407.2 760.5,407.7 761.0,407.2 761.5,406.6 762.0,406.6 762.5,407.5 763.0,408.3 763.5,407.9 764.0,407.1 764.5,406.7 765.0,407.2 765.5,407.8 766.0,408.0 766.5,408.0 767.0,407.9 767.5,408.3 768.0,408.6 768.5,408.7 769.0,408.2 769.5,407.8 770.0,408.2 770.5,408.3 771.0,408.3 771.5,407.6 772.0,406.5 772.5,406.8 773.0,408.2 773.5,409.6 774.0,406.6 774.5,403.6 775.0,402.5 775.5,404.3 776.0,406.1 776.5,404.7 777.0,402.3 777.5,400.7 778.0,402.6 778.5,404.5 779.0,404.2 779.5,402.5 780.0,400.8 780.5,402.8 781.0,404.9 781.5,405.6 782.0,404.3 782.5,403.0 783.0,403.2 783.5,403.8 784.0,404.1 784.5,403.2 785.0,402.3 785.5,402.4 786.0,403.3 786.5,404.2 787.0,403.0 787.5,401.7 788.0,401.6 788.5,403.1 789.0,404.7 789.5,404.3 790.0,403.5 790.5,402.8 791.0,403.6 791.5,404.3 792.0,403.9 792.5,402.7 793.0,401.5 793.5,402.9 794.0,404.3 794.5,404.4 795.0,402.5 795.5,400.7 796.0,401.0 796.5,401.8 797.0,402.1 797.5,400.4 798.0,398.7 798.5,398.7 799.0,399.8 799.5,401.0 800.0,399.7 800.5,398.8 801.0,398.6 801.5,399.3 802.0,400.0 802.5,400.0 803.0,399.8 803.5,399.9 804.0,401.5 804.5,403.0 805.0,402.8 805.5,401.3 806.0,399.8 806.5,401.4 807.0,402.9 807.5,403.4 808.0,402.4 808.5,401.5 809.0,402.5 809.5,404.0 810.0,403.3 810.5,402.6 811.0,401.9 811.5,401.9 812.0,402.4 812.5,403.0 813.0,402.3 813.5,401.7 814.0,401.6 814.5,402.2 815.0,402.9 815.5,402.7 816.0,402.4 816.5,402.2 817.0,402.7 817.5,403.3 818.0,403.3 818.5,403.0 819.0,402.8 819.5,403.2 820.0,403.7 820.5,403.5 821.0,402.7 821.5,401.9 822.0,402.1 822.5,402.5 823.0,402.7 823.5,402.0 824.0,401.3 824.5,401.3 825.0,401.6 825.5,402.0 826.0,401.2 826.5,400.3 827.0,399.8 827.5,399.9 828.0,400.0 828.5,399.6 829.0,398.9 829.5,398.5 830.0,399.1 830.5,399.7 831.0,399.5 831.5,398.9 832.0,398.3 832.5,398.2 833.0,398.1 833.5,397.9 834.0,397.5 834.5,397.2 835.0,397.1 835.5,397.0 836.0,396.9 836.5,396.4 837.0,396.0 837.5,396.0 838.0,396.2 838.5,396.5 839.0,396.2 839.5,395.9 840.0,395.8 840.5,395.9 841.0,396.0 841.5,395.5 842.0,394.9 842.5,394.4 843.0,395.0 843.5,395.5 844.0,395.3 844.5,394.7 845.0,394.0 845.5,394.7 846.0,395.3 846.5,395.3 847.0,394.5 847.5,393.7 848.0,394.0 848.5,394.7 849.0,395.2 849.5,394.6 850.0,394.0 850.5,393.9 851.0,394.1 851.5,394.2 852.0,393.7 852.5,393.1 853.0,392.9 853.5,393.1 854.0,393.3 854.5,392.9 855.0,392.2 855.5,391.8 856.0,392.0 856.5,391.8 857.0,391.1 857.5,390.1 858.0,389.0 858.5,389.0 859.0,388.9 859.5,388.6 860.0,387.8 860.5,387.3 861.0,387.4 861.5,387.6 862.0,387.7 862.5,386.8 863.0,385.9 863.5,386.5 864.0,387.6 864.5,388.7 865.0,388.5 865.5,388.4 866.0,388.7 866.5,389.9 867.0,391.1 867.5,391.4 868.0,391.5 868.5,391.9 869.0,393.5 869.5,395.1 870.0,395.8 870.5,395.5 871.0,395.1 871.5,396.2 872.0,397.3 872.5,397.9 873.0,397.6 873.5,397.2 874.0,397.9 874.5,398.9 875.0,400.4 875.5,398.6 876.0,396.7 876.5,397.2 877.0,399.2 877.5,401.2 878.0,399.8 878.5,398.4 879.0,398.4 879.5,400.3 880.0,402.2 880.5,401.5 881.0,400.2 881.5,399.3 882.0,399.7 882.5,400.1 883.0,400.1 883.5,399.9 884.0,399.7 884.5,400.0 885.0,400.4 885.5,400.3 886.0,399.5 886.5,398.7 887.0,399.6 887.5,401.0 888.0,401.9 888.5,401.3 889.0,400.6 889.5,400.9 890.0,401.8 890.5,402.6 891.0,401.2 891.5,399.7 892.0,399.6 892.5,401.5 893.0,403.4 893.5,401.9 894.0,399.5 894.5,397.9 895.0,399.5 895.5,401.0 896.0,401.1 896.5,400.2 897.0,399.3 897.5,400.6 898.0,402.0 898.5,402.2 899.0,400.8 899.5,399.3 900.0,399.9 900.5,400.9 901.0,401.4 901.5,400.0 902.0,398.5 902.5,398.9 903.0,400.4 903.5,401.8 904.0,400.3 904.5,398.7 905.0,398.1 905.5,399.2 906.0,400.2 906.5,399.4 907.0,398.2 907.5,397.4 908.0,398.6 908.5,399.8" fill="none" stroke="#e2b41a" stroke-width="1.15" stroke-linejoin="round"/>
<polyline points="2.5,388.6 3.0,389.0 3.5,389.3 4.0,389.6 4.5,390.2 5.0,390.7 5.5,391.1 6.0,391.4 6.5,391.7 7.0,392.2 7.5,392.8 8.0,393.2 8.5,393.5 9.0,393.2 9.5,392.7 10.0,392.2 10.5,391.6 11.0,390.8 11.5,389.9 12.0,389.3 12.5,388.8 13.0,388.4 13.5,387.5 14.0,386.6 14.5,385.9 15.0,385.4 15.5,385.6 16.0,385.7 16.5,385.8 17.0,386.0 17.5,386.2 18.0,386.4 18.5,386.5 19.0,386.0 19.5,385.0 20.0,384.4 20.5,383.7 21.0,382.9 21.5,381.9 22.0,380.9 22.5,380.1 23.0,379.4 23.5,378.6 24.0,377.6 24.5,376.7 25.0,375.9 25.5,374.6 26.0,373.4 26.5,372.0 27.0,370.6 27.5,369.3 28.0,368.3 28.5,367.2 29.0,365.8 29.5,364.4 30.0,363.1 30.5,361.9 31.0,360.7 31.5,359.3 32.0,357.9 32.5,356.5 33.0,354.9 33.5,353.3 34.0,351.7 34.5,349.9 35.0,348.2 35.5,346.6 36.0,345.0 36.5,343.4 37.0,341.6 37.5,339.8 38.0,338.4 38.5,337.1 39.0,335.8 39.5,334.2 40.0,332.7 40.5,331.2 41.0,329.9 41.5,328.5 42.0,327.0 42.5,328.2 43.0,329.4 43.5,330.8 44.0,332.3 44.5,333.6 45.0,334.7 45.5,335.9 46.0,337.4 46.5,339.4 47.0,341.2 47.5,342.9 48.0,344.6 48.5,346.4 49.0,348.3 49.5,350.2 50.0,351.8 50.5,352.7 51.0,353.8 51.5,355.0 52.0,356.2 52.5,357.2 53.0,358.1 53.5,359.2 54.0,360.4 54.5,361.6 55.0,362.6 55.5,363.4 56.0,364.1 56.5,365.0 57.0,365.8 57.5,366.6 58.0,367.2 58.5,367.8 59.0,368.8 59.5,369.9 60.0,370.8 60.5,370.5 61.0,370.2 61.5,370.0 62.0,369.9 62.5,369.8 63.0,369.4 63.5,369.0 64.0,368.9 64.5,368.8 65.0,369.5 65.5,369.8 66.0,370.1 66.5,370.5 67.0,371.1 67.5,371.6 68.0,371.9 68.5,372.1 69.0,371.7 69.5,371.0 70.0,370.3 70.5,369.5 71.0,368.5 71.5,367.6 72.0,366.8 72.5,365.9 73.0,365.1 73.5,364.1 74.0,362.8 74.5,361.6 75.0,360.4 75.5,359.1 76.0,357.5 76.5,355.9 77.0,354.4 77.5,353.2 78.0,351.9 78.5,350.4 79.0,348.9 79.5,347.4 80.0,346.0 80.5,344.6 81.0,343.0 81.5,341.3 82.0,339.7 82.5,338.4 83.0,337.1 83.5,335.6 84.0,334.0 84.5,332.3 85.0,330.9 85.5,332.9 86.0,334.9 86.5,336.7 87.0,338.5 87.5,340.5 88.0,342.5 88.5,344.4 89.0,346.2 89.5,347.9 90.0,349.7 90.5,351.6 91.0,353.6 91.5,355.1 92.0,356.7 92.5,358.4 93.0,360.3 93.5,362.3 94.0,363.9 94.5,365.4 95.0,366.9 95.5,368.4 96.0,370.0 96.5,371.5 97.0,372.9 97.5,374.4 98.0,376.1 98.5,377.8 99.0,378.7 99.5,378.7 100.0,378.8 100.5,379.1 101.0,379.4 101.5,379.6 102.0,379.7 102.5,379.8 103.0,380.5 103.5,381.3 104.0,382.1 104.5,382.5 105.0,383.0 105.5,383.5 106.0,384.2 106.5,384.9 107.0,385.5 107.5,386.0 108.0,384.7 108.5,383.5 109.0,382.2 109.5,380.8 110.0,379.4 110.5,378.0 111.0,376.8 111.5,375.7 112.0,374.5 112.5,373.0 113.0,370.4 113.5,368.1 114.0,365.9 114.5,363.5 115.0,361.0 115.5,358.4 116.0,355.9 116.5,353.6 117.0,351.3 117.5,348.8 118.0,346.4 118.5,344.0 119.0,341.6 119.5,339.1 120.0,341.5 120.5,344.1 121.0,346.7 121.5,349.3 122.0,352.0 122.5,354.5 123.0,356.5 123.5,358.4 124.0,360.7 124.5,363.0 125.0,365.1 125.5,367.1 126.0,369.0 126.5,370.7 127.0,371.9 127.5,373.1 128.0,374.1 128.5,375.1 129.0,376.2 129.5,377.5 130.0,378.8 130.5,379.0 131.0,379.1 131.5,379.4 132.0,379.7 132.5,380.1 133.0,380.3 133.5,380.4 134.0,380.9 134.5,381.9 135.0,382.9 135.5,383.9 136.0,384.8 136.5,385.8 137.0,386.9 137.5,388.0 138.0,389.0 138.5,388.0 139.0,387.0 139.5,386.2 140.0,385.5 140.5,384.3 141.0,383.0 141.5,381.6 142.0,380.5 142.5,379.5 143.0,377.1 143.5,374.5 144.0,371.9 144.5,369.4 145.0,367.0 145.5,364.5 146.0,361.9 146.5,359.4 147.0,356.9 147.5,354.5 148.0,352.2 148.5,352.3 149.0,354.5 149.5,356.8 150.0,359.3 150.5,361.8 151.0,363.9 151.5,365.6 152.0,367.3 152.5,369.2 153.0,371.2 153.5,373.1 154.0,375.0 154.5,376.8 155.0,378.7 155.5,379.3 156.0,379.9 156.5,380.4 157.0,380.9 157.5,381.5 158.0,382.3 158.5,383.0 159.0,383.5 159.5,384.0 160.0,384.5 160.5,385.5 161.0,386.5 161.5,387.3 162.0,388.0 162.5,388.6 163.0,389.7 163.5,390.7 164.0,391.6 164.5,392.3 165.0,393.0 165.5,393.6 166.0,392.2 166.5,390.8 167.0,389.1 167.5,387.5 168.0,385.9 168.5,384.4 169.0,382.9 169.5,381.2 170.0,379.0 170.5,376.9 171.0,375.0 171.5,373.0 172.0,370.9 172.5,368.7 173.0,370.7 173.5,372.7 174.0,374.8 174.5,376.7 175.0,378.5 175.5,380.4 176.0,382.0 176.5,383.7 177.0,385.2 177.5,386.6 178.0,388.0 178.5,389.6 179.0,391.2 179.5,392.7 180.0,394.1 180.5,393.9 181.0,393.9 181.5,394.0 182.0,394.1 182.5,393.9 183.0,393.7 183.5,393.6 184.0,393.8 184.5,393.9 185.0,393.8 185.5,392.3 186.0,390.7 186.5,389.4 187.0,388.0 187.5,386.5 188.0,384.8 188.5,383.2 189.0,381.9 189.5,380.6 190.0,379.2 190.5,377.0 191.0,374.8 191.5,372.8 192.0,371.0 192.5,369.0 193.0,366.8 193.5,364.5 194.0,362.5 194.5,364.8 195.0,367.1 195.5,369.2 196.0,371.2 196.5,373.3 197.0,375.6 197.5,377.8 198.0,379.4 198.5,380.9 199.0,382.5 199.5,384.2 200.0,385.8 200.5,387.3 201.0,388.7 201.5,390.0 202.0,391.7 202.5,393.4 203.0,394.1 203.5,394.6 204.0,395.1 204.5,395.7 205.0,396.3 205.5,396.9 206.0,397.4 206.5,397.9 207.0,398.4 207.5,399.2 208.0,397.6 208.5,395.9 209.0,394.1 209.5,392.5 210.0,390.8 210.5,389.2 211.0,387.3 211.5,385.2 212.0,383.1 212.5,381.1 213.0,379.1 213.5,381.4 214.0,383.8 214.5,386.1 215.0,388.6 215.5,391.1 216.0,392.4 216.5,393.5 217.0,394.6 217.5,396.0 218.0,397.6 218.5,399.0 219.0,399.3 219.5,398.6 220.0,398.2 220.5,398.5 221.0,398.7 221.5,398.8 222.0,398.9 222.5,399.1 223.0,399.5 223.5,399.8 224.0,399.2 224.5,397.9 225.0,396.5 225.5,395.4 226.0,394.3 226.5,392.9 227.0,391.5 227.5,390.0 228.0,388.4 228.5,386.7 229.0,384.9 229.5,382.9 230.0,380.9 230.5,383.2 231.0,385.6 231.5,388.0 232.0,390.2 232.5,392.4 233.0,394.4 233.5,396.5 234.0,398.6 234.5,400.5 235.0,402.4 235.5,404.4 236.0,406.5 236.5,407.5 237.0,407.1 237.5,406.6 238.0,406.1 238.5,406.6 239.0,407.1 239.5,407.3 240.0,407.5 240.5,406.4 241.0,405.8 241.5,405.1 242.0,404.3 242.5,403.3 243.0,402.4 243.5,399.3 244.0,396.3 244.5,393.3 245.0,390.1 245.5,391.6 246.0,393.3 246.5,395.1 247.0,396.9 247.5,398.4 248.0,399.0 248.5,399.6 249.0,400.5 249.5,401.4 250.0,401.9 250.5,403.7 251.0,405.7 251.5,406.7 252.0,406.3 252.5,405.7 253.0,404.9 253.5,404.1 254.0,403.6 254.5,403.1 255.0,402.5 255.5,399.3 256.0,396.1 256.5,393.1 257.0,390.2 257.5,387.2 258.0,384.7 258.5,382.2 259.0,379.9 259.5,377.6 260.0,375.4 260.5,376.7 261.0,378.1 261.5,379.5 262.0,380.9 262.5,382.4 263.0,382.3 263.5,382.2 264.0,382.2 264.5,382.3 265.0,382.5 265.5,382.5 266.0,382.4 266.5,383.0 267.0,382.3 267.5,381.7 268.0,380.9 268.5,380.0 269.0,379.0 269.5,378.3 270.0,377.7 270.5,376.9 271.0,376.0 271.5,375.0 272.0,374.3 272.5,373.6 273.0,373.0 273.5,372.8 274.0,373.8 274.5,375.0 275.0,376.3 275.5,377.6 276.0,378.7 276.5,379.3 277.0,379.5 277.5,379.9 278.0,380.3 278.5,380.6 279.0,380.7 279.5,380.9 280.0,381.2 280.5,380.1 281.0,378.9 281.5,377.6 282.0,376.3 282.5,375.1 283.0,374.0 283.5,372.8 284.0,371.5 284.5,370.2 285.0,369.0 285.5,370.5 286.0,371.9 286.5,373.2 287.0,374.5 287.5,375.8 288.0,377.4 288.5,378.9 289.0,379.5 289.5,379.5 290.0,379.5 290.5,379.8 291.0,380.1 291.5,380.2 292.0,380.3 292.5,380.3 293.0,379.2 293.5,378.2 294.0,377.0 294.5,375.7 295.0,374.4 295.5,373.3 296.0,372.3 296.5,371.1 297.0,372.8 297.5,374.5 298.0,376.3 298.5,378.2 299.0,380.1 299.5,381.8 300.0,383.5 300.5,384.6 301.0,385.8 301.5,387.0 302.0,388.0 302.5,388.8 303.0,389.8 303.5,390.9 304.0,392.1 304.5,393.1 305.0,394.1 305.5,395.1 306.0,396.3 306.5,396.7 307.0,396.1 307.5,395.4 308.0,394.6 308.5,394.0 309.0,393.5 309.5,392.9 310.0,392.2 310.5,391.4 311.0,390.8 311.5,390.4 312.0,390.0 312.5,389.2 313.0,388.2 313.5,387.4 314.0,386.7 314.5,386.0 315.0,385.1 315.5,384.1 316.0,383.2 316.5,382.5 317.0,381.8 317.5,380.9 318.0,379.9 318.5,381.4 319.0,383.4 319.5,385.3 320.0,387.1 320.5,388.6 321.0,390.1 321.5,391.5 322.0,392.6 322.5,393.5 323.0,394.2 323.5,394.8 324.0,394.8 324.5,393.9 325.0,393.1 325.5,391.9 326.0,390.8 326.5,389.9 327.0,389.1 327.5,390.4 328.0,391.4 328.5,392.4 329.0,393.3 329.5,394.5 330.0,395.7 330.5,396.8 331.0,396.6 331.5,396.4 332.0,396.4 332.5,396.4 333.0,396.3 333.5,394.9 334.0,393.5 334.5,392.2 335.0,391.0 335.5,389.8 336.0,388.4 336.5,388.2 337.0,389.3 337.5,390.5 338.0,391.7 338.5,392.5 339.0,393.3 339.5,394.3 340.0,395.5 340.5,395.6 341.0,395.6 341.5,395.5 342.0,395.4 342.5,395.5 343.0,393.8 343.5,392.0 344.0,390.1 344.5,388.1 345.0,390.0 345.5,391.8 346.0,393.5 346.5,395.2 347.0,396.8 347.5,398.6 348.0,400.4 348.5,397.9 349.0,395.3 349.5,392.6 350.0,390.2 350.5,388.0 351.0,385.7 351.5,383.1 352.0,382.0 352.5,383.8 353.0,385.8 353.5,387.8 354.0,389.7 354.5,391.5 355.0,393.3 355.5,393.7 356.0,394.1 356.5,393.4 357.0,392.6 357.5,391.8 358.0,389.9 358.5,387.9 359.0,385.8 359.5,383.5 360.0,381.3 360.5,379.2 361.0,377.2 361.5,376.0 362.0,376.4 362.5,376.8 363.0,377.4 363.5,378.1 364.0,377.0 364.5,373.5 365.0,370.1 365.5,366.8 366.0,363.8 366.5,362.8 367.0,365.8 367.5,368.9 368.0,371.9 368.5,375.1 369.0,378.2 369.5,381.3 370.0,384.5 370.5,383.0 371.0,381.6 371.5,380.2 372.0,378.6 372.5,376.9 373.0,375.2 373.5,373.8 374.0,372.4 374.5,373.8 375.0,376.2 375.5,378.6 376.0,381.2 376.5,383.9 377.0,386.7 377.5,384.5 378.0,382.4 378.5,380.4 379.0,378.5 379.5,376.6 380.0,374.5 380.5,375.9 381.0,377.5 381.5,379.1 382.0,380.8 382.5,382.4 383.0,383.9 383.5,384.4 384.0,385.0 384.5,385.6 385.0,382.8 385.5,375.4 386.0,366.5 386.5,375.8 387.0,384.2 387.5,388.9 388.0,393.7 388.5,390.4 389.0,388.2 389.5,380.5 390.0,371.3 390.5,373.3 391.0,382.4 391.5,389.7 392.0,391.6 392.5,393.4 393.0,392.3 393.5,390.5 394.0,389.2 394.5,384.3 395.0,377.3 395.5,378.8 396.0,385.7 396.5,389.0 397.0,391.4 397.5,393.8 398.0,394.6 398.5,390.7 399.0,383.4 399.5,374.4 400.0,372.5 400.5,381.8 401.0,389.6 401.5,394.3 402.0,393.4 402.5,393.0 403.0,387.8 403.5,380.2 404.0,371.5 404.5,380.3 405.0,387.9 405.5,393.8 406.0,396.1 406.5,393.7 407.0,391.3 407.5,385.3 408.0,378.0 408.5,379.6 409.0,386.7 409.5,391.9 410.0,394.1 410.5,396.4 411.0,397.1 411.5,393.2 412.0,387.7 412.5,381.0 413.0,379.6 413.5,386.6 414.0,392.6 414.5,391.2 415.0,390.1 415.5,391.1 416.0,390.6 416.5,383.8 417.0,376.0 417.5,383.9 418.0,390.8 418.5,396.1 419.0,396.2 419.5,395.1 420.0,394.6 420.5,392.2 421.0,385.1 421.5,376.8 422.0,382.0 422.5,389.8 423.0,396.1 423.5,397.6 424.0,397.6 424.5,397.1 425.0,396.6 425.5,393.7 426.0,387.0 426.5,379.1 427.0,384.1 427.5,391.8 428.0,397.6 428.5,398.6 429.0,399.6 429.5,399.6 430.0,399.6 430.5,400.0 431.0,401.0 431.5,398.9 432.0,392.5 432.5,384.5 433.0,382.8 433.5,391.4 434.0,398.9 434.5,402.6 435.0,401.1 435.5,399.6 436.0,402.1 436.5,394.9 437.0,385.7 437.5,379.4 438.0,389.9 438.5,399.0 439.0,405.5 439.5,410.6 440.0,406.9 440.5,402.8 441.0,398.6 441.5,390.0 442.0,380.1 442.5,389.9 443.0,398.4 443.5,404.7 444.0,407.7 444.5,409.3 445.0,404.0 445.5,402.4 446.0,401.3 446.5,402.6 447.0,403.9 447.5,403.4 448.0,400.8 448.5,398.3 449.0,398.4 449.5,398.6 450.0,397.7 450.5,395.3 451.0,392.9 451.5,392.8 452.0,393.4 452.5,393.4 453.0,392.0 453.5,390.7 454.0,390.3 454.5,390.5 455.0,390.8 455.5,390.0 456.0,389.2 456.5,389.0 457.0,389.5 457.5,390.1 458.0,388.9 458.5,387.4 459.0,386.3 459.5,387.4 460.0,388.5 460.5,388.2 461.0,386.6 461.5,385.1 462.0,386.5 462.5,384.2 463.0,377.9 463.5,370.7 464.0,378.1 464.5,384.7 465.0,389.2 465.5,389.6 466.0,387.3 466.5,385.1 467.0,385.4 467.5,387.5 468.0,389.5 468.5,385.6 469.0,379.8 469.5,373.1 470.0,365.9 470.5,373.0 471.0,379.5 471.5,383.7 472.0,383.9 472.5,387.5 473.0,391.1 473.5,391.3 474.0,389.3 474.5,387.3 475.0,389.0 475.5,390.5 476.0,390.5 476.5,388.0 477.0,380.3 477.5,370.5 478.0,359.1 478.5,370.6 479.0,380.9 479.5,389.2 480.0,389.0 480.5,389.1 481.0,389.1 481.5,388.8 482.0,388.5 482.5,388.6 483.0,389.4 483.5,386.4 484.0,376.3 484.5,364.1 485.0,361.5 485.5,374.1 486.0,384.9 486.5,392.3 487.0,389.8 487.5,386.5 488.0,391.0 488.5,395.4 489.0,397.1 489.5,394.4 490.0,391.8 490.5,390.4 491.0,380.1 491.5,367.1 492.0,352.3 492.5,367.2 493.0,380.3 493.5,390.8 494.0,395.2 494.5,393.5 495.0,391.8 495.5,391.1 496.0,391.9 496.5,392.7 497.0,393.0 497.5,393.1 498.0,385.7 498.5,373.6 499.0,359.5 499.5,362.5 500.0,376.4 500.5,388.0 501.0,392.5 501.5,394.7 502.0,395.3 502.5,393.7 503.0,392.0 503.5,391.7 504.0,391.8 504.5,384.7 505.0,372.7 505.5,358.7 506.0,367.3 506.5,380.3 507.0,391.0 507.5,394.8 508.0,392.1 508.5,391.8 509.0,395.2 509.5,398.6 510.0,392.9 510.5,382.1 511.0,368.3 511.5,352.6 512.0,368.4 512.5,382.3 513.0,393.3 513.5,391.1 514.0,395.1 514.5,399.2 515.0,399.5 515.5,394.0 516.0,388.6 516.5,390.3 517.0,378.7 517.5,364.9 518.0,361.9 518.5,376.2 519.0,388.5 519.5,397.4 520.0,399.4 520.5,396.6 521.0,393.8 521.5,393.6 522.0,388.1 522.5,379.2 523.0,369.0 523.5,379.2 524.0,388.1 524.5,395.1 525.0,398.7 525.5,398.8 526.0,396.6 526.5,394.5 527.0,394.8 527.5,388.1 528.0,379.3 528.5,369.3 529.0,379.3 529.5,388.1 530.0,395.1 530.5,396.5 531.0,393.9 531.5,391.4 532.0,392.9 532.5,397.1 533.0,392.4 533.5,381.3 534.0,367.8 534.5,358.8 535.0,373.4 535.5,386.1 536.0,395.2 536.5,393.4 537.0,392.4 537.5,394.0 538.0,395.6 538.5,394.1 539.0,384.2 539.5,371.6 540.0,357.4 540.5,371.6 541.0,384.1 541.5,394.0 542.0,392.9 542.5,394.3 543.0,396.4 543.5,397.7 544.0,395.6 544.5,393.5 545.0,386.3 545.5,376.1 546.0,364.5 546.5,376.1 547.0,386.3 547.5,394.3 548.0,397.8 548.5,397.7 549.0,396.2 549.5,394.4 550.0,393.1 550.5,394.0 551.0,385.4 551.5,374.5 552.0,362.0 552.5,374.5 553.0,385.4 553.5,394.0 554.0,396.9 554.5,395.7 555.0,394.6 555.5,394.2 556.0,386.4 556.5,376.5 557.0,365.3 557.5,376.5 558.0,386.4 558.5,394.1 559.0,397.2 559.5,393.8 560.0,390.3 560.5,390.1 561.0,387.6 561.5,379.3 562.0,369.8 562.5,379.2 563.0,387.4 563.5,393.9 564.0,397.0 564.5,395.8 565.0,392.7 565.5,388.8 566.0,387.2 566.5,379.3 567.0,370.2 567.5,379.2 568.0,387.0 568.5,390.0 569.0,392.5 569.5,394.1 570.0,392.2 570.5,390.2 571.0,387.5 571.5,380.5 572.0,372.5 572.5,380.4 573.0,387.3 573.5,388.7 574.0,393.1 574.5,397.5 575.0,395.4 575.5,391.8 576.0,389.3 576.5,391.3 577.0,393.4 577.5,393.1 578.0,391.2 578.5,389.4 579.0,391.5 579.5,393.7 580.0,393.3 580.5,389.1 581.0,384.9 581.5,387.7 582.0,392.2 582.5,395.0 583.0,391.1 583.5,387.1 584.0,387.3 584.5,390.3 585.0,393.3 585.5,389.6 586.0,385.9 586.5,385.6 587.0,390.4 587.5,395.2 588.0,393.0 588.5,388.9 589.0,386.1 589.5,387.9 590.0,389.7 590.5,389.4 591.0,387.6 591.5,385.9 592.0,389.6 592.5,393.7 593.0,395.0 593.5,391.9 594.0,388.9 594.5,390.0 595.0,392.2 595.5,393.4 596.0,390.6 596.5,387.8 597.0,390.1 597.5,395.8 598.0,401.5 598.5,397.0 599.0,392.5 599.5,391.4 600.0,394.2 600.5,398.5 601.0,397.4 601.5,395.0 602.0,393.4 602.5,395.2 603.0,396.9 603.5,396.3 604.0,394.0 604.5,391.7 605.0,396.0 605.5,400.4 606.0,401.3 606.5,396.9 607.0,392.6 607.5,394.6 608.0,398.1 608.5,402.7 609.0,403.8 609.5,404.9 610.0,407.8 610.5,412.0 611.0,416.1 611.5,415.0 612.0,408.9 612.5,405.2 613.0,405.3 613.5,405.4 614.0,401.8 614.5,398.6 615.0,396.0 615.5,395.8 616.0,395.6 616.5,394.5 617.0,392.8 617.5,392.2 618.0,394.2 618.5,396.2 619.0,396.0 619.5,392.6 620.0,389.2 620.5,391.1 621.0,394.3 621.5,396.1 622.0,392.7 622.5,389.2 623.0,390.2 623.5,394.2 624.0,398.2 624.5,394.7 625.0,391.3 625.5,390.3 626.0,393.0 626.5,395.6 627.0,393.4 627.5,389.9 628.0,388.1 628.5,390.9 629.0,393.8 629.5,393.4 630.0,391.0 630.5,388.6 631.0,391.4 631.5,394.2 632.0,395.0 632.5,393.0 633.0,390.9 633.5,391.5 634.0,392.7 634.5,393.7 635.0,393.9 635.5,394.3 636.0,396.5 636.5,399.7 637.0,403.0 637.5,401.2 638.0,399.3 638.5,399.5 639.0,402.7 639.5,405.9 640.0,405.0 640.5,403.0 641.0,402.0 641.5,405.3 642.0,408.7 642.5,408.1 643.0,404.4 643.5,400.7 644.0,404.7 644.5,408.7 645.0,410.2 645.5,408.1 646.0,406.0 646.5,408.4 647.0,411.9 647.5,414.2 648.0,411.5 648.5,408.9 649.0,408.1 649.5,408.5 650.0,408.9 650.5,409.1 651.0,409.3 651.5,410.1 652.0,412.0 652.5,413.9 653.0,412.7 653.5,410.8 654.0,409.6 654.5,411.3 655.0,413.0 655.5,411.9 656.0,408.8 656.5,405.7 657.0,410.4 657.5,415.0 658.0,416.0 658.5,412.4 659.0,408.8 659.5,410.1 660.0,410.4 660.5,411.2 661.0,410.4 661.5,409.5 662.0,409.3 662.5,409.5 663.0,409.7 663.5,408.0 664.0,406.2 664.5,405.5 665.0,406.3 665.5,407.5 666.0,406.6 666.5,405.3 667.0,404.6 667.5,405.9 668.0,407.3 668.5,407.4 669.0,406.7 669.5,406.0 670.0,407.1 670.5,408.2 671.0,408.2 671.5,406.8 672.0,405.4 672.5,405.9 673.0,406.9 673.5,407.4 674.0,405.8 674.5,404.2 675.0,404.3 675.5,405.5 676.0,406.8 676.5,405.8 677.0,404.9 677.5,405.1 678.0,406.8 678.5,408.6 679.0,407.2 679.5,405.0 680.0,403.6 680.5,405.3 681.0,407.0 681.5,406.6 682.0,404.7 682.5,402.9 683.0,404.0 683.5,405.2 684.0,405.1 684.5,403.2 685.0,401.3 685.5,402.8 686.0,405.1 686.5,406.5 687.0,404.2 687.5,402.0 688.0,402.3 688.5,404.2 689.0,406.2 689.5,404.5 690.0,402.8 690.5,402.9 691.0,405.1 691.5,407.3 692.0,406.7 692.5,405.3 693.0,404.8 693.5,407.2 694.0,409.7 694.5,409.7 695.0,408.2 695.5,406.6 696.0,407.4 696.5,408.3 697.0,408.5 697.5,407.6 698.0,406.8 698.5,408.4 699.0,410.6 699.5,412.0 700.0,410.5 700.5,409.0 701.0,409.9 701.5,412.5 702.0,415.0 702.5,412.2 703.0,409.3 703.5,408.5 704.0,410.7 704.5,413.0 705.0,412.4 705.5,411.2 706.0,410.6 706.5,412.0 707.0,413.4 707.5,413.8 708.0,413.1 708.5,412.5 709.0,413.7 709.5,414.9 710.0,415.0 710.5,413.4 711.0,411.7 711.5,411.7 712.0,412.0 712.5,412.0 713.0,410.7 713.5,409.4 714.0,410.3 714.5,412.6 715.0,413.3 715.5,413.2 716.0,413.0 716.5,413.2 717.0,413.9 717.5,414.6 718.0,414.9 718.5,415.1 719.0,415.4 719.5,415.9 720.0,416.4 720.5,416.4 721.0,416.3 721.5,416.1 722.0,416.6 722.5,417.1 723.0,417.3 723.5,417.2 724.0,417.0 724.5,417.7 725.0,418.7 725.5,419.4 726.0,418.9 726.5,418.4 727.0,418.5 727.5,419.0 728.0,419.4 728.5,419.4 729.0,419.5 729.5,419.6 730.0,419.9 730.5,420.2 731.0,420.1 731.5,419.8 732.0,419.7 732.5,420.5 733.0,421.3 733.5,421.3 734.0,420.9 734.5,420.4 735.0,420.9 735.5,421.3 736.0,421.4 736.5,421.3 737.0,421.1 737.5,421.6 738.0,422.1 738.5,422.5 739.0,421.8 739.5,421.1 740.0,421.0 740.5,421.2 741.0,421.5 741.5,421.2 742.0,420.9 742.5,420.9 743.0,421.2 743.5,421.5 744.0,421.1 744.5,420.7 745.0,420.4 745.5,420.8 746.0,421.2 746.5,420.9 747.0,420.1 747.5,419.4 748.0,420.3 748.5,421.3 749.0,421.4 749.5,420.2 750.0,419.0 750.5,419.8 751.0,421.0 751.5,421.8 752.0,420.6 752.5,419.5 753.0,419.5 753.5,420.3 754.0,421.1 754.5,420.4 755.0,419.8 755.5,419.5 756.0,420.0 756.5,420.4 757.0,420.1 757.5,419.6 758.0,419.2 758.5,419.8 759.0,420.3 759.5,420.1 760.0,419.5 760.5,418.9 761.0,419.6 761.5,420.2 762.0,420.4 762.5,419.9 763.0,419.4 763.5,419.8 764.0,420.5 764.5,421.0 765.0,420.7 765.5,420.4 766.0,420.5 766.5,420.9 767.0,421.3 767.5,420.5 768.0,419.8 768.5,419.7 769.0,420.5 769.5,421.3 770.0,421.0 770.5,419.8 771.0,418.9 771.5,419.2 772.0,420.2 772.5,419.5 773.0,417.4 773.5,415.3 774.0,416.1 774.5,417.0 775.0,417.0 775.5,415.7 776.0,414.5 776.5,415.3 777.0,416.5 777.5,417.3 778.0,416.1 778.5,415.0 779.0,415.2 779.5,416.4 780.0,417.5 780.5,416.1 781.0,414.6 781.5,414.1 782.0,415.2 782.5,416.2 783.0,415.5 783.5,414.4 784.0,413.8 784.5,415.0 785.0,416.3 785.5,416.3 786.0,415.3 786.5,414.4 787.0,416.5 787.5,418.5 788.0,419.0 788.5,417.1 789.0,415.2 789.5,415.4 790.0,416.3 790.5,416.3 791.0,414.3 791.5,412.3 792.0,413.3 792.5,416.2 793.0,419.2 793.5,416.9 794.0,414.6 794.5,413.9 795.0,415.8 795.5,417.8 796.0,416.1 796.5,413.5 797.0,411.9 797.5,414.4 798.0,416.9 798.5,416.0 799.0,412.9 799.5,409.7 800.0,411.2 800.5,412.9 801.0,413.6 801.5,412.7 802.0,411.8 802.5,413.2 803.0,415.1 803.5,416.6 804.0,415.9 804.5,415.2 805.0,415.4 805.5,416.3 806.0,417.1 806.5,415.6 807.0,414.1 807.5,413.7 808.0,415.0 808.5,416.3 809.0,415.8 809.5,414.9 810.0,415.0 810.5,415.5 811.0,416.0 811.5,415.8 812.0,415.3 812.5,414.8 813.0,415.6 813.5,416.4 814.0,416.6 814.5,416.0 815.0,415.4 815.5,415.5 816.0,415.9 816.5,416.2 817.0,416.0 817.5,415.8 818.0,416.0 818.5,416.3 819.0,416.7 819.5,416.3 820.0,415.9 820.5,415.7 821.0,416.3 821.5,416.9 822.0,416.2 822.5,415.1 823.0,414.4 823.5,414.9 824.0,415.4 824.5,415.0 825.0,413.8 825.5,412.6 826.0,413.5 826.5,414.3 827.0,414.5 827.5,413.6 828.0,412.8 828.5,412.5 829.0,412.4 829.5,412.2 830.0,411.6 830.5,411.2 831.0,411.3 831.5,411.9 832.0,412.4 832.5,411.5 833.0,410.6 833.5,410.4 834.0,411.2 834.5,412.1 835.0,411.6 835.5,410.7 836.0,410.1 836.5,410.5 837.0,410.9 837.5,410.6 838.0,409.9 838.5,409.1 839.0,409.3 839.5,409.4 840.0,409.1 840.5,408.4 841.0,407.6 841.5,407.8 842.0,408.3 842.5,408.6 843.0,408.1 843.5,407.6 844.0,407.9 844.5,408.6 845.0,409.3 845.5,408.4 846.0,407.5 846.5,407.1 847.0,407.6 847.5,408.1 848.0,407.9 848.5,407.4 849.0,407.1 849.5,408.0 850.0,408.8 850.5,408.3 851.0,406.9 851.5,405.6 852.0,406.0 852.5,406.3 853.0,406.3 853.5,405.6 854.0,405.0 854.5,405.3 855.0,405.9 855.5,406.2 856.0,405.3 856.5,404.2 857.0,404.0 857.5,404.3 858.0,404.6 858.5,403.9 859.0,403.1 859.5,402.6 860.0,402.3 860.5,402.1 861.0,401.2 861.5,400.2 862.0,399.4 862.5,400.0 863.0,400.6 863.5,401.2 864.0,401.4 864.5,401.5 865.0,402.5 865.5,403.4 866.0,403.9 866.5,404.0 867.0,404.2 867.5,405.1 868.0,406.3 868.5,407.2 869.0,407.2 869.5,407.2 870.0,407.7 870.5,408.2 871.0,408.7 871.5,408.8 872.0,408.8 872.5,409.2 873.0,410.0 873.5,410.9 874.0,411.0 874.5,410.8 875.0,410.1 875.5,411.6 876.0,413.0 876.5,412.9 877.0,411.7 877.5,410.5 878.0,412.5 878.5,414.5 879.0,415.2 879.5,414.0 880.0,412.7 880.5,413.0 881.0,413.6 881.5,413.9 882.0,413.0 882.5,412.1 883.0,412.0 883.5,412.3 884.0,412.7 884.5,412.1 885.0,411.6 885.5,411.7 886.0,412.8 886.5,413.9 887.0,413.5 887.5,412.7 888.0,412.3 888.5,413.3 889.0,414.4 889.5,413.6 890.0,411.5 890.5,409.5 891.0,411.1 891.5,412.8 892.0,413.6 892.5,413.0 893.0,412.4 893.5,413.0 894.0,413.8 894.5,414.2 895.0,412.9 895.5,411.5 896.0,411.6 896.5,412.7 897.0,413.7 897.5,412.6 898.0,411.5 898.5,411.4 899.0,412.8 899.5,414.2 900.0,413.4 900.5,412.0 901.0,411.2 901.5,412.7 902.0,414.2 902.5,413.6 903.0,411.5 903.5,409.5 904.0,410.8 904.5,412.1 905.0,412.0 905.5,409.9 906.0,407.7 906.5,409.8 907.0,413.0 907.5,415.0 908.0,412.2 908.5,409.4" fill="none" stroke="#119048" stroke-width="1.15" stroke-linejoin="round"/>
<line x1="721.5" x2="721.5" y1="388" y2="396" stroke="#e8b818" stroke-width="1.5"/><line x1="721.5" x2="721.5" y1="394" y2="419" stroke="#12964a" stroke-width="2"/>
<line x1="772.8" x2="772.8" y1="356" y2="378" stroke="#e8b818" stroke-width="1.5"/><line x1="772.8" x2="772.8" y1="378" y2="418" stroke="#12964a" stroke-width="2.2"/><line x1="772.8" x2="772.8" y1="378" y2="408" stroke="#a8c020" stroke-width="1"/>
<line x1="871.2" x2="871.2" y1="360" y2="378" stroke="#12964a" stroke-width="1.5"/><line x1="871.2" x2="871.2" y1="378" y2="386" stroke="#c8c020" stroke-width="2"/><line x1="871.2" x2="871.2" y1="386" y2="410" stroke="#12964a" stroke-width="2.2"/>
<rect x="3" y="303" width="51" height="11" fill="#030303"/><text x="3" y="312.5" font-size="9.5" fill="#e85020">EN55022Q</text>
<rect x="3" y="323.5" width="51" height="11" fill="#030303"/><text x="3" y="333" font-size="9.5" fill="#e85020">EN55022A</text>
<text x="39" y="244.0" font-size="12.7" letter-spacing="0.22" fill="#1878b8">Limit Check</text>
<text x="340" y="244.0" font-size="12.5" letter-spacing="1.3" fill="#18a040">PASS</text>
<text x="39" y="259.5" font-size="12.7" letter-spacing="0.22" fill="#1878b8">Line EN55022A</text>
<text x="340" y="259.5" font-size="12.5" letter-spacing="1.3" fill="#18a040">PASS</text>
<text x="39" y="275.0" font-size="12.7" letter-spacing="0.22" fill="#1878b8">Line EN55022Q</text>
<text x="340" y="275.0" font-size="12.5" letter-spacing="1.3" fill="#18a040">PASS</text>
<text x="762.5" y="244.8" font-size="12.6" letter-spacing="1.2" fill="#18a8a8">M1[1]</text>
<text x="907.5" y="244.8" font-size="12.7" fill="#18a8a8" text-anchor="end">43.60 dBµV</text>
<text x="907.5" y="258.8" font-size="13" fill="#18a8a8" text-anchor="end">2.625000 MHz</text>
<text x="491.2" y="338.5" font-size="9" fill="#18a8a8" text-anchor="middle">M1</text>
<path d="M488.6 342 H495.4 L492 347.8 Z" fill="#18b0b8"/>
<path d="M482.3 350.4 l5 5 m0 -5 l-5 5" stroke="#e04818" stroke-width="1" fill="none"/>
<path d="M489.5 346.4 l5 5 m0 -5 l-5 5" stroke="#e04818" stroke-width="1" fill="none"/>
<path d="M496.7 348.0 l5 5 m0 -5 l-5 5" stroke="#e04818" stroke-width="1" fill="none"/>
<path d="M503.1 349.0 l5 5 m0 -5 l-5 5" stroke="#e04818" stroke-width="1" fill="none"/>
<path d="M509.0 347.5 l5 5 m0 -5 l-5 5" stroke="#e04818" stroke-width="1" fill="none"/>
<path d="M39.5 312.0 l5 5 m0 -5 l-5 5" stroke="#e04818" stroke-width="1" fill="none"/>
<path d="M82.5 313.0 l5 5 m0 -5 l-5 5" stroke="#e04818" stroke-width="1" fill="none"/>
<path d="M117.0 322.0 l5 5 m0 -5 l-5 5" stroke="#e04818" stroke-width="1" fill="none"/>
<path d="M82.5 328.5 l5 5 m0 -5 l-5 5" stroke="#e04818" stroke-width="1" fill="none"/>
<path d="M117.0 336.5 l5 5 m0 -5 l-5 5" stroke="#e04818" stroke-width="1" fill="none"/>
<text x="4.3" y="434.5" font-size="9.5" fill="#109098">TF</text>
<circle cx="860.0" cy="617.3" r="3" fill="#1e9cff" stroke="#000" stroke-width="1.2"/>
<circle cx="869.8" cy="617.3" r="3" fill="#fff" stroke="#000" stroke-width="1.2"/>
<circle cx="879.0" cy="617.3" r="3" fill="#fff" stroke="#000" stroke-width="1.2"/>
<circle cx="961.0" cy="617.3" r="3" fill="#1e9cff" stroke="#000" stroke-width="1.2"/>
</svg>
<div style="left:429.8px;top:207.0px;width:53px;height:13px;background:rgba(255,255,255,0.12);border:1px solid rgba(255,255,255,0.14)"></div>
<svg style="left:0;top:0" width="1000" height="625"><line x1="436" x2="474.5" y1="213.6" y2="213.6" stroke="#d8d8d8" stroke-width="1.2" stroke-dasharray="1.3 2.1"/></svg>
<div style="left:429.8px;top:449.3px;width:53px;height:13px;background:rgba(255,255,255,0.12);border:1px solid rgba(255,255,255,0.14)"></div>
<svg style="left:0;top:0" width="1000" height="625"><line x1="436" x2="474.5" y1="455.9" y2="455.9" stroke="#d8d8d8" stroke-width="1.2" stroke-dasharray="1.3 2.1"/></svg>
</div></body></html>
